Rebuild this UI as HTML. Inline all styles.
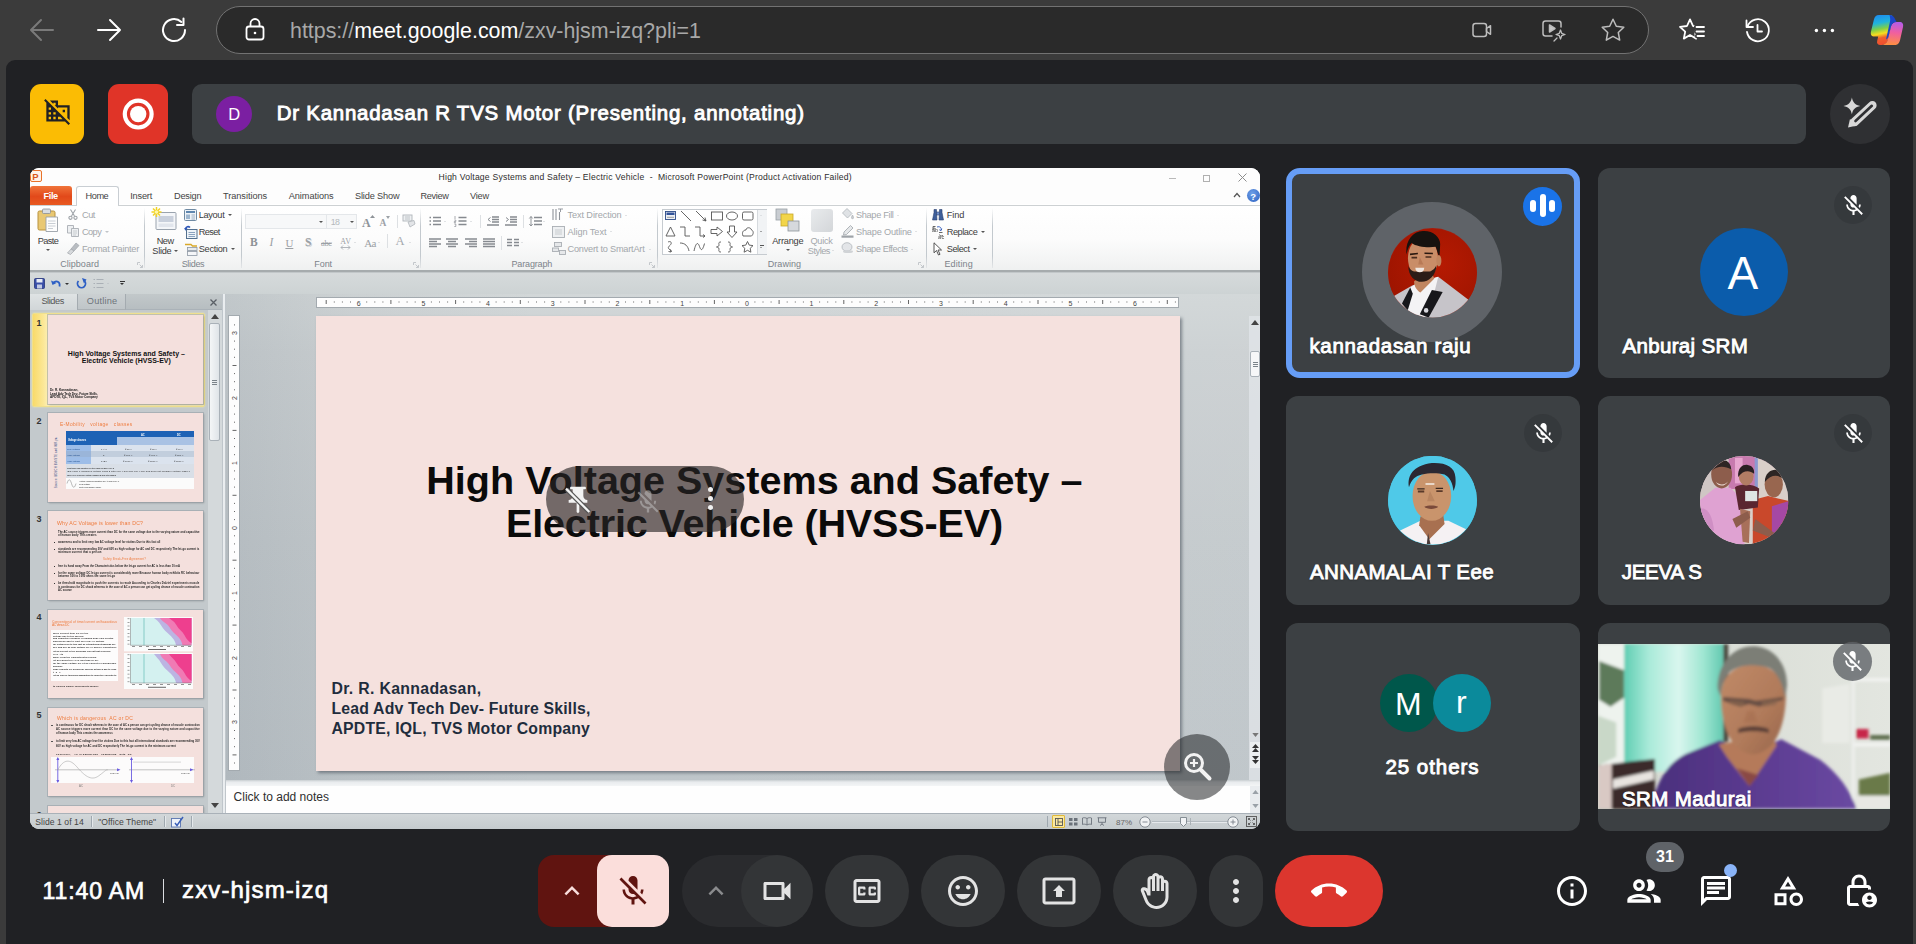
<!DOCTYPE html>
<html lang="en">
<head>
<meta charset="utf-8">
<title>Meet - zxv-hjsm-izq</title>
<style>
html,body{margin:0;padding:0;}
body{width:1916px;height:944px;overflow:hidden;background:#3b3b3b;font-family:"Liberation Sans",sans-serif;position:relative;}
.abs{position:absolute;}
.t{position:absolute;white-space:nowrap;line-height:1;}
svg{position:absolute;overflow:visible;}
/* browser */
#chrome{position:absolute;left:0;top:0;width:1916px;height:944px;background:#3b3b3b;}
#omni{position:absolute;left:216px;top:6px;width:1431px;height:46px;border-radius:24px;background:#2a2a2a;border:1.5px solid #727272;}
#page{position:absolute;left:6px;top:60px;width:1907px;height:884px;background:#202124;border-radius:9px 9px 0 0;}
/* meet */
.tile{position:absolute;background:#3c4043;border-radius:12px;overflow:hidden;}
.name{position:absolute;white-space:nowrap;line-height:1;color:#fff;font-size:20px;font-weight:bold;text-shadow:0 1px 2px rgba(0,0,0,.6);}
.micoff{position:absolute;margin:-3px 0 0 -3px;width:38px;height:38px;border-radius:50%;background:rgba(32,33,36,.55);}
</style>
</head>
<body>
<div id="chrome">
  <div id="omni"></div>
  <div class="t" id="url" style="left:290px;top:21px;font-size:21.4px;color:#a8a8a8;">https://<span style="color:#fff">meet.google.com</span>/zxv-hjsm-izq?pli=1</div>

  <!-- back -->
  <svg style="left:29px;top:18px" width="26" height="24" viewBox="0 0 26 24" fill="none" stroke="#7a7a7a" stroke-width="2" stroke-linecap="round" stroke-linejoin="round"><path d="M24 12H2M12 2L2 12l10 10"/></svg>
  <!-- forward -->
  <svg style="left:96px;top:18px" width="26" height="24" viewBox="0 0 26 24" fill="none" stroke="#fff" stroke-width="2" stroke-linecap="round" stroke-linejoin="round"><path d="M2 12h22M14 2l10 10-10 10"/></svg>
  <!-- reload -->
  <svg style="left:161px;top:17px" width="26" height="26" viewBox="0 0 26 26" fill="none" stroke="#fff" stroke-width="2" stroke-linecap="round" stroke-linejoin="round"><path d="M24 13a11 11 0 1 1-3.6-8.1"/><path d="M22.500 1.500v6.500h-6.500"/></svg>
  <!-- lock -->
  <svg style="left:245px;top:18px" width="20" height="23" viewBox="0 0 20 23" fill="none" stroke="#fff" stroke-width="1.800" stroke-linejoin="round"><rect x="1.500" y="8.500" width="17" height="13" rx="2.500"/><path d="M5.500 8.500V5.500a4.500 4.500 0 0 1 9 0v3"/><circle cx="10" cy="15" r="1.300" fill="#fff" stroke="none"/></svg>
  <!-- camera in omnibox -->
  <svg style="left:1472px;top:21px" width="22" height="18" viewBox="0 0 22 18" fill="none" stroke="#bdbdbd" stroke-width="1.500" stroke-linejoin="round"><rect x="1" y="2.500" width="13.500" height="13" rx="2.500"/><path d="M14.500 7.500l4-2.800v8.600l-4-2.800z"/></svg>
  <!-- play sparkle -->
  <svg style="left:1541px;top:19px" width="26" height="24" viewBox="0 0 26 24" fill="none" stroke="#bdbdbd" stroke-width="1.500" stroke-linejoin="round" stroke-linecap="round"><path d="M11 17H4.500a2.500 2.500 0 0 1-2.500-2.500v-10A2.500 2.500 0 0 1 4.500 2h13A2.500 2.500 0 0 1 20 4.500V8"/><path d="M8.500 6v7l5.500-3.500z" fill="#c8c8c8"/><path d="M19.500 11l1.200 3.300 3.300 1.200-3.300 1.200-1.200 3.300-1.200-3.300-3.300-1.200 3.300-1.200z" stroke-width="1.300"/><path d="M13 22l3-3" stroke-width="1.300"/></svg>
  <!-- star -->
  <svg style="left:1600px;top:17px" width="26" height="26" viewBox="0 0 26 26" fill="none" stroke="#bdbdbd" stroke-width="1.500" stroke-linejoin="round"><path d="M13 2.200l3.300 7 7.500 1-5.500 5.300 1.400 7.600L13 19.400l-6.700 3.700 1.400-7.600L2.200 10.200l7.500-1z"/></svg>
  <!-- favorites -->
  <svg style="left:1679px;top:17px" width="28" height="26" viewBox="0 0 28 26" fill="none" stroke="#fff" stroke-width="1.800" stroke-linejoin="round" stroke-linecap="round"><path d="M11 2.400l3 6.600 7 .8-5.200 4.800 1.400 7L11 18l-6.200 3.600 1.400-7L1 9.800 8 9z"/><path d="M17.500 10h8M17.500 14.500h8M18.500 19h7" stroke="#3b3b3b" stroke-width="5"/><path d="M17.500 10h7.500M17.500 14.500h7.500M18.500 19h6.500"/></svg>
  <!-- history -->
  <svg style="left:1744px;top:17px" width="27" height="27" viewBox="0 0 27 27" fill="none" stroke="#fff" stroke-width="1.800" stroke-linejoin="round" stroke-linecap="round"><path d="M3.500 9.500A11 11 0 1 1 3 15"/><path d="M2.500 3.500v6.500h6.500"/><path d="M13.500 8v6.500h4.500"/></svg>
  <!-- dots -->
  <svg style="left:1812px;top:27px" width="24" height="6" viewBox="0 0 24 6" fill="#fff"><circle cx="4.400" cy="3.500" r="1.700"/><circle cx="12.400" cy="3.500" r="1.700"/><circle cx="20.400" cy="3.500" r="1.700"/></svg>
  <!-- copilot -->
  <svg style="left:1870px;top:14px" width="34" height="32" viewBox="0 0 34 32"><defs>
    <linearGradient id="cpa" x1=".1" y1="0" x2=".25" y2="1"><stop offset="0" stop-color="#1e88f0"/><stop offset=".3" stop-color="#20b4dc"/><stop offset=".5" stop-color="#7fd048"/><stop offset=".66" stop-color="#f6de20"/><stop offset=".8" stop-color="#f0602e"/><stop offset="1" stop-color="#f0502e"/></linearGradient>
    <linearGradient id="cpb" x1=".5" y1="0" x2=".4" y2="1"><stop offset="0" stop-color="#b45ce8"/><stop offset=".45" stop-color="#f05fa0"/><stop offset="1" stop-color="#ff9040"/></linearGradient></defs>
    <path d="M9 1h10.500c2.800 0 4 1.300 3.300 4L18 25.500c-.8 3.300-2.800 5.500-6 5.500h-1.500c-2.800 0-4-1.500-3.300-4.200l1-4.300H4.500C1.500 22.500.3 20.500 1 17.500L3.800 6C4.600 2.800 6 1 9 1z" fill="url(#cpa)"/>
    <path d="M25 31H14.500c-.5 0-1-.1-1.400-.2 2.500-.6 4-2.600 4.700-5.300L21 12.500c.8-3 2.500-4.500 5.500-4.500h3c3 0 4.200 2 3.500 5L30.200 25.500C29.400 28.800 28 31 25 31z" fill="url(#cpb)"/>
    <path d="M19.500 1c2.500 0 4.500 1.500 5.500 4l1.500 3c-3 0-4.700 1.500-5.500 4.500l-2.500 10c-.5 1.500-1.300 2.500-2.500 3l4-18c.5-2.500 0-4.500-.5-6.500z" fill="#1a46c8"/>
  </svg>
</div>
<div id="page">
<div class="abs" id="m" style="left:-6px;top:-60px;width:1916px;height:944px;">
  <!-- top bar -->
  <div class="abs" style="left:30px;top:84px;width:54px;height:60px;border-radius:11px;background:#fbbc04;"></div>
  <svg style="left:43.600px;top:97px" width="28" height="28" viewBox="0 0 24 24" fill="#202124"><path d="M8 5h2v2h-.900L12 9.900V9h8v8.900l2 2V7H12V3H5.100L8 5.900V5zm8 6h2v2h-2zM1.300 1.800L.100 3.100 2 5v16h16l3 3 1.300-1.300-21-20.900zM4 19v-2h2v2H4zm0-4v-2h2v2H4zm0-4V9h2v2H4zm4 8v-2h2v2H8zm0-4v-2h2v2H8zm4 4v-2h1.900l2 2H12z"/></svg>
  <div class="abs" style="left:108px;top:84px;width:60px;height:60px;border-radius:11px;background:#e03428;"></div>
  <svg style="left:122px;top:98px" width="32" height="32" viewBox="0 0 32 32"><circle cx="16.200" cy="16.100" r="13.400" fill="none" stroke="#fff" stroke-width="4.200"/><circle cx="16.200" cy="16.100" r="8.200" fill="#fff"/></svg>
  <div class="abs" style="left:192px;top:84px;width:1614px;height:60px;border-radius:10px;background:#3c4043;"></div>
  <div class="abs" style="left:216.300px;top:96px;width:36px;height:36px;border-radius:50%;background:#7b1fa2;"></div>
  <div class="t" style="left:228.300px;top:106px;font-size:16.500px;color:#fff;">D</div>
  
  <div class="abs" style="left:1830px;top:84px;width:60px;height:60px;border-radius:50%;background:#2f3033;"></div>
  <svg style="left:1830px;top:84px" width="60" height="60" viewBox="0 0 60 60"><path d="M21.900 13.500c.9 5 3.400 7.500 8.400 8.400-5 .9-7.500 3.400-8.400 8.400-.9-5-3.400-7.500-8.400-8.400 5-.9 7.500-3.400 8.400-8.400z" fill="#d8d8d8"/><path d="M42.300 21.300L24.500 38" stroke="#d8d8d8" stroke-width="8.600" stroke-linecap="round"/><path d="M18 43.500l2-8.500 7 6.500z" fill="#d8d8d8"/><path d="M41.800 21.800L25.500 37" stroke="#2f3033" stroke-width="2.600" stroke-linecap="round"/></svg>

  <!-- tiles -->
  <div class="tile" style="left:1286px;top:168px;width:294px;height:210px;box-sizing:border-box;border:6px solid #669df6;border-radius:14px;"></div>
  <div class="abs" style="left:1362px;top:202px;width:140px;height:140px;border-radius:50%;background:#5f6368;"></div>
  <div class="abs" id="av1" style="left:1388px;top:228px;width:89px;height:89px;border-radius:50%;background:#a81a0a;overflow:hidden;"></div>
  <div class="abs" style="left:1523px;top:187px;width:39px;height:39px;border-radius:50%;background:#1a73e8;"></div>
  <div class="abs" style="left:1530px;top:199.500px;width:6px;height:12.500px;border-radius:3px;background:#fff;"></div>
  <div class="abs" style="left:1539.600px;top:194.300px;width:6.200px;height:23px;border-radius:3px;background:#fff;"></div>
  <div class="abs" style="left:1549.300px;top:199.500px;width:6px;height:12.500px;border-radius:3px;background:#fff;"></div>

  <div class="tile" style="left:1598px;top:168px;width:292px;height:210px;"></div>
  <div class="abs" style="left:1700px;top:228px;width:88px;height:88px;border-radius:50%;background:#0b5cab;"></div>
  <div class="t" style="left:1727.500px;top:250px;font-size:46px;color:#fff;">A</div>
  <div class="micoff" style="left:1837px;top:189px;background:rgba(32,33,36,.22)"></div><svg style="left:1840.5px;top:192.5px" width="25" height="25" viewBox="0 0 24 24" fill="#fff"><path d="M19 11h-1.700c0 .740-.160 1.430-.430 2.050l1.230 1.230c.560-.980.900-2.090.900-3.280zm-4.020.170c0-.060.020-.110.020-.170V5c0-1.660-1.340-3-3-3S9 3.340 9 5v.180l5.980 5.990zM4.270 3L3 4.270l6.010 6.010V11c0 1.660 1.330 3 2.990 3 .220 0 .440-.030.650-.080l1.660 1.660c-.710.330-1.500.520-2.310.520-2.760 0-5.300-2.100-5.300-5.100H5c0 3.410 2.720 6.230 6 6.720V21h2v-3.280c.910-.130 1.770-.450 2.540-.900L19.730 21 21 19.730 4.270 3z"/></svg>

  <div class="tile" style="left:1286px;top:396px;width:294px;height:209px;"></div>
  <div class="abs" id="av3" style="left:1388px;top:456px;width:89px;height:89px;border-radius:50%;background:#3fc3e0;overflow:hidden;"></div>
  <div class="micoff" style="left:1527px;top:417px;background:rgba(32,33,36,.22)"></div><svg style="left:1530.5px;top:420.5px" width="25" height="25" viewBox="0 0 24 24" fill="#fff"><path d="M19 11h-1.700c0 .740-.160 1.430-.430 2.050l1.230 1.230c.560-.980.900-2.090.900-3.280zm-4.020.170c0-.060.020-.110.020-.170V5c0-1.660-1.340-3-3-3S9 3.340 9 5v.180l5.980 5.990zM4.270 3L3 4.270l6.010 6.010V11c0 1.660 1.330 3 2.990 3 .220 0 .440-.030.650-.080l1.660 1.660c-.710.330-1.500.520-2.310.520-2.760 0-5.300-2.100-5.300-5.100H5c0 3.410 2.720 6.230 6 6.720V21h2v-3.280c.910-.130 1.770-.450 2.540-.900L19.730 21 21 19.730 4.270 3z"/></svg>

  <div class="tile" style="left:1598px;top:396px;width:292px;height:209px;"></div>
  <div class="abs" id="av4" style="left:1700px;top:456px;width:88px;height:88px;border-radius:50%;background:#b98aa0;overflow:hidden;"></div>
  <div class="micoff" style="left:1837px;top:417px;background:rgba(32,33,36,.22)"></div><svg style="left:1840.5px;top:420.5px" width="25" height="25" viewBox="0 0 24 24" fill="#fff"><path d="M19 11h-1.700c0 .740-.160 1.430-.430 2.050l1.230 1.230c.560-.980.900-2.090.900-3.280zm-4.020.170c0-.060.020-.110.020-.170V5c0-1.660-1.340-3-3-3S9 3.340 9 5v.180l5.980 5.990zM4.270 3L3 4.270l6.010 6.010V11c0 1.660 1.330 3 2.990 3 .220 0 .440-.030.650-.080l1.660 1.660c-.710.330-1.500.520-2.310.520-2.760 0-5.300-2.100-5.300-5.100H5c0 3.410 2.720 6.230 6 6.720V21h2v-3.280c.910-.130 1.770-.450 2.540-.900L19.730 21 21 19.730 4.270 3z"/></svg>

  <div class="tile" style="left:1286px;top:623px;width:294px;height:208px;"></div>
  <div class="abs" style="left:1380px;top:674px;width:58px;height:58px;border-radius:50%;background:#00574b;"></div>
  <div class="t" style="left:1395px;top:688px;font-size:32px;color:#fff;">M</div>
  <div class="abs" style="left:1433px;top:674px;width:58px;height:58px;border-radius:50%;background:#0b8a9b;"></div>
  <div class="t" style="left:1456px;top:686px;font-size:32px;color:#fff;">r</div>

  <div class="tile" style="left:1598px;top:623px;width:292px;height:208px;"></div>
  <div class="abs" id="vid" style="left:1598px;top:644px;width:292px;height:165px;background:#9ec9b4;overflow:hidden;"></div>
  <div class="micoff" style="left:1837px;top:644px;background:rgba(70,70,70,.6)"></div><svg style="left:1840.5px;top:647.5px" width="25" height="25" viewBox="0 0 24 24" fill="#fff"><path d="M19 11h-1.700c0 .740-.160 1.430-.430 2.050l1.230 1.230c.560-.980.900-2.090.900-3.280zm-4.020.170c0-.060.020-.110.020-.170V5c0-1.660-1.340-3-3-3S9 3.340 9 5v.180l5.980 5.990zM4.270 3L3 4.270l6.010 6.010V11c0 1.660 1.330 3 2.990 3 .220 0 .440-.030.650-.080l1.660 1.660c-.710.330-1.500.520-2.310.520-2.760 0-5.300-2.100-5.300-5.100H5c0 3.410 2.720 6.230 6 6.720V21h2v-3.280c.910-.130 1.770-.450 2.540-.900L19.730 21 21 19.730 4.270 3z"/></svg>

  <!-- bottom bar -->
  <div class="t" style="left:42.500px;top:880px;font-size:23px;color:#fff;letter-spacing:.900px;-webkit-text-stroke:.700px #fff;">11:40 AM</div>
  <div class="abs" style="left:163px;top:879px;width:1px;height:24px;background:#dadce0;"></div>
  <div class="t" style="left:182px;top:878px;font-size:24px;color:#fff;letter-spacing:1.150px;-webkit-text-stroke:.700px #fff;">zxv-hjsm-izq</div>

  <div class="abs" style="left:538px;top:855px;width:100px;height:72px;border-radius:16px 0 0 16px;background:#601410;"></div>
  <div class="abs" style="left:597px;top:855px;width:72px;height:72px;border-radius:15px;background:#fbdedb;"></div>
  <svg style="left:556.5px;top:876.0px" width="30" height="30" viewBox="0 0 24 24" fill="#f9dedc"><path d="M12 8l-6 6 1.410 1.410L12 10.830l4.590 4.580L18 14z"/></svg>
  <svg style="left:614.5px;top:873.0px" width="36" height="36" viewBox="0 0 24 24" fill="#601410"><path d="M19 11h-1.700c0 .740-.160 1.430-.430 2.050l1.230 1.230c.560-.980.900-2.090.900-3.280zm-4.020.170c0-.060.020-.110.020-.170V5c0-1.660-1.340-3-3-3S9 3.340 9 5v.180l5.980 5.990zM4.270 3L3 4.270l6.010 6.010V11c0 1.660 1.330 3 2.990 3 .220 0 .440-.030.650-.080l1.660 1.660c-.710.330-1.500.520-2.310.520-2.760 0-5.300-2.100-5.300-5.100H5c0 3.410 2.720 6.230 6 6.720V21h2v-3.280c.910-.130 1.770-.450 2.540-.900L19.730 21 21 19.730 4.270 3z"/></svg>

  <div class="abs" style="left:682px;top:855px;width:130px;height:72px;border-radius:36px;background:#2a2b2e;"></div>
  <div class="abs" style="left:741px;top:855px;width:72px;height:72px;border-radius:36px;background:#333537;"></div>
  <svg style="left:700.5px;top:876.0px" width="30" height="30" viewBox="0 0 24 24" fill="#8a8b8d"><path d="M12 8l-6 6 1.410 1.410L12 10.830l4.590 4.580L18 14z"/></svg>
  <svg style="left:759.0px;top:873.0px" width="36" height="36" viewBox="0 0 24 24" fill="#e3e3e3"><path d="M15 8v8H5V8h10m1-2H4c-.550 0-1 .450-1 1v10c0 .550.450 1 1 1h12c.550 0 1-.450 1-1v-3.500l4 4v-11l-4 4V7c0-.550-.450-1-1-1z"/></svg>
  <div class="abs" style="left:825px;top:855px;width:84px;height:72px;border-radius:36px;background:#333537;"></div>
  <svg style="left:849.0px;top:873.0px" width="36" height="36" viewBox="0 0 24 24" fill="#e3e3e3"><path d="M19 4H5c-1.110 0-2 .900-2 2v12c0 1.100.890 2 2 2h14c1.100 0 2-.900 2-2V6c0-1.100-.900-2-2-2zm0 14H5V6h14v12zM7 15h3c.550 0 1-.450 1-1v-1H9.500v.500h-2v-3h2v.500H11v-1c0-.550-.450-1-1-1H7c-.550 0-1 .450-1 1v4c0 .550.450 1 1 1zm7 0h3c.550 0 1-.450 1-1v-1h-1.500v.500h-2v-3h2v.500H18v-1c0-.550-.450-1-1-1h-3c-.550 0-1 .450-1 1v4c0 .550.450 1 1 1z"/></svg>
  <div class="abs" style="left:921px;top:855px;width:84px;height:72px;border-radius:36px;background:#333537;"></div>
  <svg style="left:945.0px;top:873.0px" width="36" height="36" viewBox="0 0 24 24" fill="#e3e3e3"><path d="M11.990 2C6.470 2 2 6.480 2 12s4.470 10 9.990 10C17.520 22 22 17.520 22 12S17.520 2 11.990 2zM12 20c-4.420 0-8-3.580-8-8s3.580-8 8-8 8 3.580 8 8-3.580 8-8 8zm3.500-9c.830 0 1.500-.670 1.500-1.500S16.330 8 15.500 8 14 8.670 14 9.500s.670 1.500 1.500 1.500zm-7 0c.830 0 1.500-.670 1.500-1.500S9.330 8 8.500 8 7 8.670 7 9.500 7.670 11 8.500 11zm3.500 6.500c2.330 0 4.310-1.460 5.110-3.500H6.890c.800 2.040 2.780 3.500 5.110 3.500z"/></svg>
  <div class="abs" style="left:1017px;top:855px;width:84px;height:72px;border-radius:36px;background:#333537;"></div>
  <svg style="left:1041.0px;top:873.0px" width="36" height="36" viewBox="0 0 24 24" fill="#e3e3e3"><path d="M21 3H3c-1.110 0-2 .890-2 2v14c0 1.110.890 2 2 2h18c1.110 0 2-.890 2-2V5c0-1.110-.890-2-2-2zm0 16.020H3V4.980h18v14.040zM10 12H8l4-4 4 4h-2v4h-4v-4z"/></svg>
  <div class="abs" style="left:1113px;top:855px;width:84px;height:72px;border-radius:36px;background:#333537;"></div>
  <svg style="left:1137.0px;top:873.0px" width="36" height="36" viewBox="0 0 24 24" fill="#e3e3e3"><path d="M21 7c0-1.380-1.120-2.500-2.500-2.500-.170 0-.340.020-.500.050V4c0-1.380-1.120-2.500-2.500-2.500-.230 0-.460.030-.670.090C14.460.660 13.560 0 12.500 0c-1.230 0-2.250.890-2.460 2.060C9.870 2.020 9.690 2 9.500 2 8.120 2 7 3.120 7 4.500v5.890c-.340-.310-.760-.540-1.220-.660L5.010 9.520c-.830-.230-1.700.090-2.190.830-.380.570-.400 1.310-.150 1.950l2.560 6.430C6.490 21.910 9.570 24 13 24c4.420 0 8-3.580 8-8V7zm-2 9c0 3.310-2.690 6-6 6-2.610 0-4.950-1.590-5.910-4.010l-2.600-6.540.530.140c.460.120.830.460 1 .900L7 15h2V4.500c0-.280.220-.500.500-.500s.500.220.500.500V12h2V2.500c0-.280.220-.500.500-.500s.500.220.500.500V12h2V4c0-.280.220-.500.500-.500s.500.220.500.500v8h2V7c0-.280.220-.500.500-.500s.500.220.500.500v9z"/></svg>
  <div class="abs" style="left:1209px;top:855px;width:54px;height:72px;border-radius:36px;background:#333537;"></div>
  <svg style="left:1218.0px;top:873.0px" width="36" height="36" viewBox="0 0 24 24" fill="#e3e3e3"><path d="M12 8c1.100 0 2-.900 2-2s-.900-2-2-2-2 .900-2 2 .900 2 2 2zm0 2c-1.100 0-2 .900-2 2s.900 2 2 2 2-.900 2-2-.900-2-2-2zm0 6c-1.100 0-2 .900-2 2s.900 2 2 2 2-.900 2-2-.900-2-2-2z"/></svg>
  <div class="abs" style="left:1275px;top:855px;width:108px;height:72px;border-radius:36px;background:#dc362e;"></div>
  <svg style="left:1311.0px;top:873.0px" width="36" height="36" viewBox="0 0 24 24" fill="#fff"><path d="M12 9c-1.600 0-3.150.250-4.600.720v3.100c0 .390-.230.740-.560.900-.980.490-1.870 1.120-2.660 1.850-.180.180-.430.280-.700.280-.280 0-.530-.110-.710-.290L.290 13.080c-.180-.170-.290-.420-.290-.700 0-.280.110-.530.290-.710C3.340 8.780 7.460 7 12 7s8.660 1.780 11.710 4.670c.180.180.290.430.290.710 0 .280-.110.530-.290.710l-2.480 2.480c-.180.180-.430.290-.710.290-.270 0-.520-.110-.700-.280-.790-.740-1.690-1.360-2.670-1.850-.330-.160-.560-.500-.560-.900v-3.100C15.150 9.250 13.600 9 12 9z"/></svg>

  <svg style="left:1554.0px;top:873.0px" width="36" height="36" viewBox="0 0 24 24" fill="#fff"><path d="M11 7h2v2h-2zm0 4h2v6h-2zm1-9C6.480 2 2 6.480 2 12s4.480 10 10 10 10-4.480 10-10S17.520 2 12 2zm0 18c-4.410 0-8-3.590-8-8s3.590-8 8-8 8 3.590 8 8-3.590 8-8 8z"/></svg>
  <svg style="left:1624px;top:871px" width="40" height="40" viewBox="0 0 24 24" fill="#fff"><path d="M9 13.750c-2.340 0-7 1.170-7 3.500V19h14v-1.750c0-2.330-4.660-3.500-7-3.500zM4.340 17c.840-.580 2.870-1.250 4.660-1.250s3.820.670 4.660 1.250H4.340zM9 12c1.930 0 3.500-1.570 3.500-3.500S10.930 5 9 5 5.500 6.570 5.500 8.500 7.070 12 9 12zm0-5c.830 0 1.500.670 1.500 1.500S9.830 10 9 10s-1.500-.670-1.500-1.500S8.170 7 9 7zm7.040 6.810c1.160.840 1.960 1.960 1.960 3.440V19h4v-1.750c0-2.020-3.500-3.170-5.960-3.440zM15 12c1.930 0 3.500-1.570 3.500-3.500S16.930 5 15 5c-.540 0-1.040.130-1.500.350.630.890 1 1.980 1 3.150s-.370 2.260-1 3.150c.460.220.960.350 1.500.350z"/></svg>
  <svg style="left:1698.0px;top:873.0px" width="36" height="36" viewBox="0 0 24 24" fill="#fff"><path d="M4 4h16v12H5.170L4 17.170V4m0-2c-1.100 0-1.990.900-1.990 2L2 22l4-4h14c1.100 0 2-.900 2-2V4c0-1.100-.900-2-2-2H4zm2 10h8v2H6v-2zm0-3h12v2H6V9zm0-3h12v2H6V6z"/></svg>
  <svg style="left:1770.0px;top:873.0px" width="36" height="36" viewBox="0 0 24 24" fill="#fff"><path d="M12 2l-5.500 9h11L12 2zm0 3.840L13.930 9h-3.870L12 5.840zM17.500 13c-2.490 0-4.500 2.010-4.500 4.500s2.010 4.500 4.500 4.500 4.500-2.010 4.500-4.500-2.010-4.500-4.500-4.500zm0 7c-1.380 0-2.500-1.120-2.500-2.500s1.120-2.500 2.500-2.500 2.500 1.120 2.500 2.500-1.120 2.500-2.500 2.500zM3 21.500h8v-8H3v8zm2-6h4v4H5v-4z"/></svg>
  <svg style="left:1841px;top:873px" width="36" height="36" viewBox="0 0 24 24" fill="#fff"><path d="M6 20V10h12v1.090c.33-.05.66-.09 1-.09s.67.040 1 .090V10c0-1.100-.900-2-2-2h-1V6c0-2.760-2.240-5-5-5S7 3.240 7 6v2H6c-1.100 0-2 .900-2 2v10c0 1.100.900 2 2 2h6.260c-.420-.600-.750-1.280-.970-2H6zM9 6c0-1.660 1.340-3 3-3s3 1.340 3 3v2H9V6z"/><path d="M19 13c-2.760 0-5 2.240-5 5s2.240 5 5 5 5-2.240 5-5-2.240-5-5-5zm0 2c.830 0 1.500.670 1.500 1.500S19.830 18 19 18s-1.500-.670-1.500-1.500S18.170 15 19 15zm0 6c-1.030 0-1.940-.520-2.480-1.320.730-.420 1.570-.680 2.480-.680s1.750.260 2.480.680c-.540.800-1.450 1.320-2.480 1.320z"/></svg>
  <div class="abs" style="left:1646px;top:842px;width:38px;height:30px;border-radius:15px;background:#5f6368;"></div>
  <div class="t" style="left:1656px;top:849px;font-size:16px;font-weight:bold;color:#fff;">31</div>
  <div class="abs" style="left:1723.500px;top:863.500px;width:13px;height:13px;border-radius:50%;background:#8ab4f8;"></div>
<div class="t" style="left:1309.4px;top:336.1px;font-size:20.5px;letter-spacing:0.69px;color:#fff;-webkit-text-stroke:.900px #fff;text-shadow:0 1px 2px rgba(0,0,0,.55);">kannadasan raju</div>
<div class="t" style="left:1622.5px;top:336.2px;font-size:20.5px;letter-spacing:0.33px;color:#fff;-webkit-text-stroke:.900px #fff;text-shadow:0 1px 2px rgba(0,0,0,.55);">Anburaj SRM</div>
<div class="t" style="left:1310.0px;top:562.0px;font-size:20.5px;letter-spacing:0.39px;color:#fff;-webkit-text-stroke:.900px #fff;text-shadow:0 1px 2px rgba(0,0,0,.55);">ANNAMALAI T Eee</div>
<div class="t" style="left:1621.7px;top:562.0px;font-size:20.5px;letter-spacing:-0.25px;color:#fff;-webkit-text-stroke:.900px #fff;text-shadow:0 1px 2px rgba(0,0,0,.55);">JEEVA S</div>
<div class="t" style="left:1385.5px;top:756.9px;font-size:20.5px;letter-spacing:0.95px;color:#fff;-webkit-text-stroke:.900px #fff;">25 others</div>
<div class="t" style="left:276.7px;top:103.3px;font-size:20.4px;letter-spacing:0.80px;color:#fff;-webkit-text-stroke:.900px #fff;">Dr Kannadasan R TVS Motor (Presenting, annotating)</div>
<svg style="left:1387.900px;top:228.500px" width="89" height="88.400" viewBox="125 130 700 695">
<defs><clipPath id="c1"><circle cx="475" cy="477.500" r="349"/></clipPath>
<radialGradient id="g1" cx=".6" cy=".4" r=".7"><stop offset="0" stop-color="#b51a02"/><stop offset="1" stop-color="#9c1400"/></radialGradient></defs>
<g clip-path="url(#c1)">
<rect x="125" y="130" width="700" height="695" fill="url(#g1)"/>
<path d="M165 660l150-85 205-70 235 180 20 160H160z" fill="#c6c4c9"/>
<path d="M300 590l60-40 160-45-30 120-80 200-140-40z" fill="#f4f3f5"/>
<path d="M330 540c0 40 20 70 50 90l110-110-30-60z" fill="#c08560"/>
<path d="M300 590l20 50-40 130-45-55z" fill="#17171b"/>
<path d="M470 610l85 15-110 200-70-25z" fill="#17171b"/>
<ellipse cx="400" cy="360" rx="118" ry="165" fill="#c98d68"/>
<path d="M285 420c0 80 50 125 105 125s115-50 115-130c-10 30-40 50-60 50h-100c-30 0-50-20-60-45z" fill="#2b1c17"/>
<path d="M340 435h70c0 25-15 35-35 35s-35-10-35-35z" fill="#efe6e0"/>
<path d="M270 330c-10-100 40-180 130-185 80-5 140 50 135 110l-5 95c-15-20-20-60-30-80-60 10-150 0-190-30-20 20-30 50-40 90z" fill="#17120f"/>
<ellipse cx="525" cy="380" rx="20" ry="45" fill="#c08560"/>
<path d="M298 322l62-6v12l-62 8zM412 314l66 2v13l-66-3z" fill="#2a1810"/><path d="M310 348h44v13h-44zM420 344h46v13h-46z" fill="#4a2c1e"/><path d="M375 350l-12 60h40z" fill="#b87a56"/>
<circle cx="425" cy="770" r="18" fill="#d8d8de"/>
</g></svg>
<svg style="left:1387.900px;top:455.900px" width="89" height="88.400" viewBox="125 125 700 695">
<defs><clipPath id="c3"><circle cx="475" cy="472.500" r="349"/></clipPath></defs>
<g clip-path="url(#c3)">
<rect x="125" y="125" width="700" height="695" fill="#4fc9e8"/>
<path d="M200 720l180-85h220l160 75 30 120H180z" fill="#f5f1f3"/>
<path d="M380 600l-10 70 80 110 120-120-10-70z" fill="#a87050"/>
<path d="M440 730l20 90h-30z" fill="#4a3a38"/>
<ellipse cx="470" cy="440" rx="152" ry="195" fill="#c9946c"/>
<path d="M290 370c-15-90 30-170 180-190 110-5 180 30 185 110 5 50 0 80-15 110-5-60-30-110-70-130-80-20-200-10-240 30-20 20-30 40-40 70z" fill="#2b2832"/>
<path d="M420 340h70v12h-70z" fill="#f4efe8"/>
<path d="M355 378h58v10h-58zM500 375h58v10h-58z" fill="#3a2820"/><path d="M360 397h50v14h-50zM505 394h50v14h-50z" fill="#5a3a2a"/><path d="M455 400l-22 80h60z" fill="#b98560"/>
<path d="M410 525c30-14 80-14 110 0-20 22-90 22-110 0z" fill="#7a4a3a"/>
</g></svg>
<svg style="left:1699.900px;top:455.900px" width="88.400" height="88.400" viewBox="125 125 695 695">
<defs><clipPath id="c4"><circle cx="472.500" cy="472.500" r="347"/></clipPath></defs>
<g clip-path="url(#c4)">
<rect x="125" y="125" width="695" height="695" fill="#d9cfc9"/>
<rect x="125" y="125" width="240" height="350" fill="#cfc6c4"/>
<rect x="350" y="125" width="220" height="260" fill="#c77aae"/>
<rect x="400" y="140" width="60" height="200" fill="#e7a6cf"/>
<rect x="555" y="125" width="25" height="300" fill="#8d9ad0"/>
<path d="M125 470l120-95h120l100 100 10 350H125z" fill="#dfa2d2"/>
<path d="M125 540c60-20 100 60 110 170l-110 20z" fill="#cf8fc4"/>
<ellipse cx="295" cy="270" rx="82" ry="110" fill="#8d5d4c"/>
<path d="M215 240c0-70 60-95 110-80 30 10 45 40 45 70-50-30-110-30-155 10z" fill="#2d2524"/>
<path d="M250 330c30 25 70 25 95-5-20 40-75 45-95 5z" fill="#e8d8d0"/>
<path d="M540 470l120-30 170 40v340H540z" fill="#c9482b"/>
<path d="M690 520l130-40v220l-130 60z" fill="#a548a4"/>
<path d="M560 620l150 110-20 40-150-60z" fill="#8d5d4c"/>
<ellipse cx="705" cy="350" rx="72" ry="100" fill="#98664f"/>
<path d="M635 330c0-80 60-105 100-95 30 8 45 40 45 70-40-35-100-35-145 25z" fill="#2d2524"/>
<path d="M400 370c40-30 140-30 190 10l-10 150-150 20z" fill="#5a2630"/>
<rect x="480" y="400" width="95" height="80" fill="#dfe5e4"/>
<ellipse cx="488" cy="285" rx="58" ry="72" fill="#b27c64"/>
<path d="M425 290c-5-80 40-100 75-95 40 5 55 40 50 70-35-30-85-30-125 25z" fill="#2a2022"/>
<path d="M440 540l80 20-10 250-50-10z" fill="#a8705a"/>
<path d="M380 620l120-60 20 50-110 80z" fill="#8d5d4c"/>
</g></svg>
<svg style="left:1598px;top:643.900px;overflow:hidden" width="292.200" height="164.700" viewBox="35 105 1283 723" preserveAspectRatio="none">
<defs>
<linearGradient id="cur" x1="0" y1="0" x2="1" y2="0"><stop offset="0" stop-color="#5fcdb2"/><stop offset=".25" stop-color="#a9ead9"/><stop offset=".55" stop-color="#d9f6ee"/><stop offset=".8" stop-color="#9fe6d2"/><stop offset="1" stop-color="#62c9b0"/></linearGradient>
<linearGradient id="wall" x1="0" y1="0" x2="1" y2="0"><stop offset="0" stop-color="#d3d8cf"/><stop offset="1" stop-color="#e3e6e0"/></linearGradient>
<filter id="bl"><feGaussianBlur stdDeviation="7"/></filter>
<linearGradient id="shirt" x1="0" y1="0" x2="1" y2="0"><stop offset="0" stop-color="#4a2f7c"/><stop offset=".5" stop-color="#5b3b90"/><stop offset="1" stop-color="#6a49a2"/></linearGradient>
<linearGradient id="face" x1="0" y1="0" x2="1" y2="1"><stop offset="0" stop-color="#c08a68"/><stop offset=".6" stop-color="#b07a5a"/><stop offset="1" stop-color="#96644a"/></linearGradient>
</defs>
<rect x="35" y="105" width="1283" height="723" fill="url(#wall)"/>
<g filter="url(#bl)">
<rect x="35" y="105" width="160" height="723" fill="#eef3ee"/>
<path d="M40 180l110 40v120l-60 40-50-30z" fill="#5d7a5a"/>
<path d="M35 420l80 30v150l-80 40z" fill="#c9d8c8"/>
<rect x="150" y="105" width="435" height="560" fill="url(#cur)"/>
<rect x="585" y="105" width="22" height="430" fill="#4a4a40"/>
<path d="M35 640l150-20 100-10v220H35z" fill="#3b2c2a"/>
<path d="M35 640l60-10v200H35z" fill="#d9c9c4"/>
<path d="M100 700l180-40v40l-180 40z" fill="#e8e4e0"/>
<rect x="1150" y="255" width="170" height="14" fill="#f3f4f2"/>
<rect x="1150" y="540" width="170" height="14" fill="#f3f4f2"/>
<rect x="1150" y="255" width="12" height="573" fill="#eef0ee"/>
<rect x="1168" y="478" width="55" height="42" fill="#c72848"/>
<rect x="1230" y="505" width="88" height="20" fill="#5a6a4a"/>
<path d="M1020 300l120-20v260h-120z" fill="#e9ebe6"/>
<path d="M1180 700l138-30v120l-138 30z" fill="#6a7a4a"/>
<path d="M1170 770h148v58h-148z" fill="#e8e8e4"/>
<path d="M270 828c20-120 70-200 150-240l150-60 130 60 140-65 170 90c80 60 130 130 160 215z" fill="url(#shirt)"/>
<path d="M565 545l35 55 100 130 120-180-25-45z" fill="#b57a5a"/>
<path d="M645 650l55 80 40-50z" fill="#8a4a44"/>
<path d="M575 330c0-80 60-135 140-135s150 60 145 150c-5 110-40 235-145 245-100-10-140-130-140-260z" fill="url(#face)"/>
<path d="M560 300c0-110 70-185 155-185s150 70 150 170l-8 60c-10-70-40-120-70-135-60-20-130-15-170 15-25 25-40 60-45 110z" fill="#7b7e76"/>
<path d="M585 338l115 8 28 8 120-16v12l-105 30-45-12-40 12-75-26z" fill="#5a4640" opacity=".85"/>
<path d="M610 352l70 6-10 22-50-8zM750 356l80-8-15 26-55 6z" fill="#8a6650" opacity=".7"/>
<path d="M650 478c35-16 100-16 135 0v18c-35-10-100-10-135 0z" fill="#5a4038"/>
<path d="M690 400l-15 50h60l-15-50z" fill="#a56e50" opacity=".6"/>
</g>
</svg>
<div class="abs" style="left:1833px;top:641.500px;width:39px;height:39px;border-radius:50%;background:rgba(95,99,104,.8);"></div><svg style="left:1840px;top:648.500px" width="25" height="25" viewBox="0 0 24 24" fill="#fff"><path d="M19 11h-1.700c0 .740-.160 1.430-.430 2.050l1.230 1.230c.560-.980.900-2.090.900-3.280zm-4.020.170c0-.060.020-.110.020-.170V5c0-1.660-1.340-3-3-3S9 3.340 9 5v.180l5.980 5.990zM4.270 3L3 4.270l6.010 6.010V11c0 1.660 1.330 3 2.990 3 .220 0 .440-.030.650-.080l1.660 1.660c-.710.330-1.500.520-2.310.520-2.760 0-5.300-2.100-5.300-5.100H5c0 3.410 2.720 6.230 6 6.720V21h2v-3.280c.910-.130 1.770-.450 2.540-.900L19.730 21 21 19.730 4.270 3z"/></svg>
<div class="t" style="left:1621.9px;top:789.1px;font-size:20.5px;letter-spacing:0.41px;color:#fff;-webkit-text-stroke:.900px #fff;text-shadow:0 1px 2px rgba(0,0,0,.6);">SRM Madurai</div><div class="abs" id="ppt" style="left:30px;top:168px;width:1230px;height:661px;border-radius:9px;overflow:hidden;background:#fff;">
<div class="abs" style="left:-30px;top:-168px;width:1916px;height:944px;">
<div class="abs" style="left:30px;top:168px;width:1230px;height:36px;background:#fdfdfd;"></div>
<div class="abs" style="left:30px;top:169.500px;width:9.500px;height:10px;border:1.300px solid #e8722a;border-radius:2px;background:#fff3e8;"></div>
<div class="t" style="left:32.3px;top:171.6px;font-size:9.5px;letter-spacing:-0.34px;color:#d8581a;font-weight:bold;">P</div>
<div class="t" style="left:438.6px;top:173.2px;font-size:8.6px;letter-spacing:0.21px;color:#2d2d2d;white-space:pre;">High Voltage Systems and Safety – Electric Vehicle  -  Microsoft PowerPoint (Product Activation Failed)</div>
<div class="abs" style="left:1169px;top:178px;width:7px;height:1px;background:#b9b9b9;"></div>
<div class="abs" style="left:1203px;top:175px;width:5px;height:5px;border:1px solid #b0b0b0;"></div>
<svg style="left:1238px;top:173px" width="9" height="9" viewBox="0 0 9 9" stroke="#8d8d8d" stroke-width="1"><path d="M.5.5l8 8M8.500.5l-8 8"/></svg>
<svg style="left:1233px;top:192px" width="8" height="6" viewBox="0 0 8 6" fill="none" stroke="#555" stroke-width="1.200"><path d="M1 5l3-3.500L7 5"/></svg>
<div class="abs" style="left:1246.500px;top:188.500px;width:13px;height:13px;border-radius:50%;background:radial-gradient(circle at 40% 35%,#6ea0e8,#2a5fc0);"></div>
<div class="t" style="left:1250.3px;top:191.8px;font-size:9.5px;letter-spacing:0.00px;color:#fff;font-weight:bold;">?</div>
<div class="abs" style="left:30px;top:186px;width:42px;height:18.500px;border-radius:3px 3px 0 0;background:linear-gradient(#f0743a,#e2491a 55%,#e85a22);"></div>
<div class="t" style="left:43.6px;top:192.0px;font-size:9.2px;letter-spacing:-0.41px;color:#fff;font-weight:bold;">File</div>
<div class="abs" style="left:75.500px;top:186px;width:43px;height:20px;box-sizing:border-box;border:1px solid #c9ced3;border-bottom:none;border-radius:3px 3px 0 0;background:#fff;"></div>
<div class="t" style="left:85.5px;top:192.0px;font-size:9.2px;letter-spacing:-0.43px;color:#444;">Home</div>
<div class="t" style="left:130.2px;top:192.0px;font-size:9.2px;letter-spacing:-0.18px;color:#444;">Insert</div>
<div class="t" style="left:174.0px;top:192.0px;font-size:9.2px;letter-spacing:-0.21px;color:#444;">Design</div>
<div class="t" style="left:222.9px;top:192.0px;font-size:9.2px;letter-spacing:-0.03px;color:#444;">Transitions</div>
<div class="t" style="left:288.7px;top:192.0px;font-size:9.2px;letter-spacing:-0.06px;color:#444;">Animations</div>
<div class="t" style="left:355.0px;top:192.0px;font-size:9.2px;letter-spacing:-0.16px;color:#444;">Slide Show</div>
<div class="t" style="left:420.6px;top:192.0px;font-size:9.2px;letter-spacing:-0.38px;color:#444;">Review</div>
<div class="t" style="left:470.0px;top:192.0px;font-size:9.2px;letter-spacing:-0.19px;color:#444;">View</div>
<div class="abs" style="left:30px;top:204.500px;width:1230px;height:66px;background:linear-gradient(#ffffff 0%,#fcfcfc 50%,#f3f4f4 85%,#eef0f0 100%);border-top:1px solid #cdd1d3;box-sizing:border-box;"></div>
<div class="abs" style="left:76.5px;top:204px;width:41px;height:2px;background:#fff;"></div>
<div class="abs" style="left:30px;top:270px;width:1230px;height:1.5px;background:#a6abad;"></div>
<div class="abs" style="left:30px;top:271.5px;width:1230px;height:1.5px;background:#c2c7c9;"></div>
<div class="abs" style="left:144.4px;top:208px;width:1px;height:60px;background:linear-gradient(rgba(200,205,210,0),#c3c9ce 30%,#c3c9ce 80%,rgba(200,205,210,.3));"></div>
<div class="abs" style="left:240.9px;top:208px;width:1px;height:60px;background:linear-gradient(rgba(200,205,210,0),#c3c9ce 30%,#c3c9ce 80%,rgba(200,205,210,.3));"></div>
<div class="abs" style="left:420px;top:208px;width:1px;height:60px;background:linear-gradient(rgba(200,205,210,0),#c3c9ce 30%,#c3c9ce 80%,rgba(200,205,210,.3));"></div>
<div class="abs" style="left:656.5px;top:208px;width:1px;height:60px;background:linear-gradient(rgba(200,205,210,0),#c3c9ce 30%,#c3c9ce 80%,rgba(200,205,210,.3));"></div>
<div class="abs" style="left:925.8px;top:208px;width:1px;height:60px;background:linear-gradient(rgba(200,205,210,0),#c3c9ce 30%,#c3c9ce 80%,rgba(200,205,210,.3));"></div>
<div class="abs" style="left:991.5px;top:208px;width:1px;height:60px;background:linear-gradient(rgba(200,205,210,0),#c3c9ce 30%,#c3c9ce 80%,rgba(200,205,210,.3));"></div>
<div class="t" style="left:60.2px;top:259.8px;font-size:9px;letter-spacing:0.03px;color:#7c838a;">Clipboard</div>
<div class="t" style="left:181.7px;top:259.8px;font-size:9px;letter-spacing:-0.32px;color:#7c838a;">Slides</div>
<div class="t" style="left:314.3px;top:259.8px;font-size:9px;letter-spacing:-0.08px;color:#7c838a;">Font</div>
<div class="t" style="left:511.5px;top:259.8px;font-size:9px;letter-spacing:-0.15px;color:#7c838a;">Paragraph</div>
<div class="t" style="left:767.8px;top:259.8px;font-size:9px;letter-spacing:0.03px;color:#7c838a;">Drawing</div>
<div class="t" style="left:944.4px;top:259.8px;font-size:9px;letter-spacing:0.14px;color:#7c838a;">Editing</div>
<svg style="left:137px;top:262px" width="6" height="6" viewBox="0 0 6 6" fill="none" stroke="#c3c7cb" stroke-width="1"><path d="M.5 3V.5H3M2.500 2.500l3 3M5.500 3v2.500H3"/></svg>
<svg style="left:413px;top:262px" width="6" height="6" viewBox="0 0 6 6" fill="none" stroke="#c3c7cb" stroke-width="1"><path d="M.5 3V.5H3M2.500 2.500l3 3M5.500 3v2.500H3"/></svg>
<svg style="left:649px;top:262px" width="6" height="6" viewBox="0 0 6 6" fill="none" stroke="#c3c7cb" stroke-width="1"><path d="M.5 3V.5H3M2.500 2.500l3 3M5.500 3v2.500H3"/></svg>
<svg style="left:917.5px;top:262px" width="6" height="6" viewBox="0 0 6 6" fill="none" stroke="#c3c7cb" stroke-width="1"><path d="M.5 3V.5H3M2.500 2.500l3 3M5.500 3v2.500H3"/></svg>
<svg style="left:37px;top:208px" width="23" height="25" viewBox="0 0 23 25"><rect x="1" y="3" width="17" height="19" rx="1.500" fill="#e9c873" stroke="#b9923f" stroke-width="1"/><rect x="5.500" y="1" width="8" height="4.500" rx="1" fill="#d9dde2" stroke="#8a8f96" stroke-width=".8"/><path d="M9 9h11.500v14.500H9z" fill="#fdfdfd" stroke="#9aa0a8" stroke-width=".9"/><path d="M11 13h7.500M11 15.500h7.500M11 18h7.500M11 20.500h5" stroke="#c3c8cf" stroke-width=".9"/></svg>
<div class="t" style="left:37.7px;top:236.9px;font-size:9.2px;letter-spacing:-0.60px;color:#3b3b3b;">Paste</div>
<div class="abs" style="left:45.7px;top:249.35px;width:0;height:0;border-left:2.3px solid transparent;border-right:2.3px solid transparent;border-top:2.3px solid #555;"></div>
<svg style="left:68px;top:209px" width="10" height="11" viewBox="0 0 10 11" fill="none" stroke="#9ea3a8" stroke-width="1.100"><path d="M2.500.5l4 6.500M7.500.5l-4 6.500"/><circle cx="2.500" cy="8.800" r="1.600"/><circle cx="7.500" cy="8.800" r="1.600"/></svg>
<div class="t" style="left:82.0px;top:211.3px;font-size:9.2px;letter-spacing:-0.44px;color:#a3a7ab;">Cut</div>
<svg style="left:67px;top:225px" width="12" height="12" viewBox="0 0 12 12" fill="#eef0f2" stroke="#a9aeb3" stroke-width=".9"><path d="M.5.5h6v7.500h-6z"/><path d="M4.500 3.500h7v8h-7z"/><path d="M6 6h4M6 8h4M6 10h3" stroke="#c3c7cb"/></svg>
<div class="t" style="left:82.0px;top:228.1px;font-size:9.2px;letter-spacing:-0.57px;color:#a3a7ab;">Copy</div>
<div class="abs" style="left:104.7px;top:231.0px;width:0;height:0;border-left:2px solid transparent;border-right:2px solid transparent;border-top:2px solid #c0c4c8;"></div>
<svg style="left:67px;top:242px" width="13" height="13" viewBox="0 0 13 13" fill="#b9bdc2" stroke="#a0a5aa" stroke-width=".7"><path d="M9 1l3 2.500-5 5.500-3-2z"/><path d="M4 7l3 2-3.500 3.500L.5 11z" fill="#d6d9dc"/></svg>
<div class="t" style="left:82.0px;top:245.0px;font-size:9.2px;letter-spacing:-0.27px;color:#a3a7ab;">Format Painter</div>
<svg style="left:151px;top:207px" width="27" height="25" viewBox="0 0 27 25"><rect x="5" y="5.500" width="20" height="17" rx="1" fill="#f4f6f9" stroke="#9aa3ae" stroke-width="1"/><rect x="7.500" y="9" width="15" height="6" fill="#c9d0dc"/><rect x="7.500" y="16.500" width="15" height="3.500" fill="#e1e5ec"/><path d="M5.500 0v10M.5 5h10M2 1.500l7 7M9 1.500l-7 7" stroke="#f2d324" stroke-width="1.500"/><circle cx="5.500" cy="5" r="1.700" fill="#fff7a8"/></svg>
<div class="t" style="left:156.7px;top:236.9px;font-size:9.2px;letter-spacing:-0.50px;color:#3b3b3b;">New</div>
<div class="t" style="left:152.3px;top:246.8px;font-size:9.2px;letter-spacing:-0.29px;color:#3b3b3b;">Slide</div>
<div class="abs" style="left:174.1px;top:249.95px;width:0;height:0;border-left:2.1px solid transparent;border-right:2.1px solid transparent;border-top:2.1px solid #555;"></div>
<svg style="left:184px;top:209px" width="13" height="12" viewBox="0 0 13 12"><rect x=".5" y=".5" width="12" height="11" rx="1" fill="#eef3f8" stroke="#6f8aa3" stroke-width="1"/><rect x="2" y="2" width="9" height="2" fill="#5f87b0"/><rect x="2" y="5.500" width="4" height="4.500" fill="#9db6cf"/><path d="M7.500 6h3.500M7.500 8h3.500M7.500 10h3.500" stroke="#8aa0b8" stroke-width=".8"/></svg>
<div class="t" style="left:198.8px;top:211.3px;font-size:9.2px;letter-spacing:-0.34px;color:#3b3b3b;">Layout</div>
<div class="abs" style="left:227.9px;top:214.45px;width:0;height:0;border-left:2.1px solid transparent;border-right:2.1px solid transparent;border-top:2.1px solid #555;"></div>
<svg style="left:184px;top:225px" width="14" height="14" viewBox="0 0 14 14"><rect x="2.500" y="4.500" width="10.500" height="9" fill="#eef3f8" stroke="#53708f" stroke-width="1"/><path d="M4.500 7.500h6.500M4.500 9.500h6.500M4.500 11.500h6.500" stroke="#7f9ab8" stroke-width=".9"/><path d="M6 2.500C4.500 1 2 1.500 1.500 4" fill="none" stroke="#2d56b8" stroke-width="1.600"/><path d="M0 3.200l1.700 2.500L3.500 3z" fill="#2d56b8"/></svg>
<div class="t" style="left:198.8px;top:228.1px;font-size:9.2px;letter-spacing:-0.65px;color:#3b3b3b;">Reset</div>
<svg style="left:184px;top:242px" width="14" height="14" viewBox="0 0 14 14"><path d="M1 2.500h6l1.500 1.500H13" fill="none" stroke="#d9a928" stroke-width="1.300"/><rect x="3.500" y="5.500" width="9.500" height="3" fill="#e8ebef" stroke="#8d97a3" stroke-width=".8"/><rect x="3.500" y="9.500" width="9.500" height="4" fill="#f5f6f8" stroke="#8d97a3" stroke-width=".8"/></svg>
<div class="t" style="left:198.8px;top:245.0px;font-size:9.2px;letter-spacing:-0.31px;color:#3b3b3b;">Section</div>
<div class="abs" style="left:230.9px;top:248.45px;width:0;height:0;border-left:2.1px solid transparent;border-right:2.1px solid transparent;border-top:2.1px solid #555;"></div>
<div class="abs" style="left:244.500px;top:214px;width:82px;height:15px;box-sizing:border-box;background:#f7f8f9;border:1px solid #e4e7ea;"></div>
<div class="abs" style="left:326px;top:214px;width:31px;height:15px;box-sizing:border-box;background:#f7f8f9;border:1px solid #e4e7ea;"></div>
<div class="abs" style="left:318.9px;top:220.95px;width:0;height:0;border-left:2.1px solid transparent;border-right:2.1px solid transparent;border-top:2.1px solid #555;"></div>
<div class="abs" style="left:349.7px;top:220.95px;width:0;height:0;border-left:2.1px solid transparent;border-right:2.1px solid transparent;border-top:2.1px solid #555;"></div>
<div class="t" style="left:330.7px;top:218.4px;font-size:8.8px;letter-spacing:-0.49px;color:#b4b8bc;">18</div>
<div class="t" style="left:362.0px;top:217.1px;font-size:12px;letter-spacing:0.00px;color:#8f9499;font-weight:bold;font-family:'Liberation Serif',serif;">A</div>
<svg style="left:370px;top:215px" width="5" height="3" viewBox="0 0 5 3" fill="#8f9499"><path d="M0 3l2.500-3L5 3z"/></svg>
<div class="t" style="left:379.6px;top:219.3px;font-size:9.5px;letter-spacing:0.00px;color:#9da2a7;font-weight:bold;font-family:'Liberation Serif',serif;">A</div>
<svg style="left:386px;top:216px" width="4" height="3" viewBox="0 0 4 3" fill="#9da2a7"><path d="M0 0l2 3 2-3z"/></svg>
<div class="abs" style="left:396.5px;top:215px;width:1px;height:13px;background:#dde0e3;"></div>
<svg style="left:402px;top:214px" width="14" height="14" viewBox="0 0 14 14"><rect x="1" y="1" width="9" height="6" fill="#eef0f2" stroke="#b0b5ba" stroke-width=".9"/><path d="M3 3h5M3 5h5" stroke="#b9bec3" stroke-width=".9"/><path d="M6 8l6-1.500 1 3.500-5 3z" fill="#e3e5e8" stroke="#b0b5ba" stroke-width=".8"/></svg>
<div class="t" style="left:249.9px;top:237.1px;font-size:11.5px;letter-spacing:0.00px;color:#8d9297;font-weight:bold;font-family:'Liberation Serif',serif;">B</div>
<div class="t" style="left:269.5px;top:237.1px;font-size:11.5px;letter-spacing:0.00px;color:#9ba0a5;font-family:'Liberation Serif',serif;font-style:italic;">I</div>
<div class="t" style="left:285.4px;top:237.5px;font-size:11px;letter-spacing:0.00px;color:#9ba0a5;font-family:'Liberation Serif',serif;text-decoration:underline;">U</div>
<div class="t" style="left:305.1px;top:237.1px;font-size:11.5px;letter-spacing:0.00px;color:#9ba0a5;font-weight:bold;font-family:'Liberation Serif',serif;text-shadow:1px 1px 0 #d0d3d6;">S</div>
<div class="t" style="left:321.1px;top:239.1px;font-size:8.5px;letter-spacing:-0.40px;color:#9ba0a5;font-family:'Liberation Serif',serif;text-decoration:line-through;">abc</div>
<div class="t" style="left:340.2px;top:237.5px;font-size:8px;letter-spacing:0.41px;color:#9ba0a5;font-family:'Liberation Serif',serif;">AV</div>
<svg style="left:340px;top:244.500px" width="11" height="5" viewBox="0 0 11 5" fill="none" stroke="#a9aeb3" stroke-width=".9"><path d="M1 2.500h9M3 .5l-2 2 2 2M8 .5l2 2-2 2"/></svg>
<div class="abs" style="left:353.7px;top:242.1px;width:0;height:0;border-left:1.8px solid transparent;border-right:1.8px solid transparent;border-top:1.8px solid #c3c7cb;"></div>
<div class="t" style="left:364.3px;top:237.5px;font-size:11px;letter-spacing:-0.73px;color:#9ba0a5;font-family:'Liberation Serif',serif;">Aa</div>
<div class="abs" style="left:378.2px;top:242.1px;width:0;height:0;border-left:1.8px solid transparent;border-right:1.8px solid transparent;border-top:1.8px solid #c3c7cb;"></div>
<div class="abs" style="left:386.5px;top:234px;width:1px;height:14px;background:#dde0e3;"></div>
<div class="t" style="left:395.6px;top:235.2px;font-size:12.5px;letter-spacing:0.00px;color:#a4a9ae;font-family:'Liberation Serif',serif;">A</div>
<div class="abs" style="left:408.7px;top:242.1px;width:0;height:0;border-left:1.8px solid transparent;border-right:1.8px solid transparent;border-top:1.8px solid #c3c7cb;"></div>
<svg style="left:428.5px;top:215.5px" width="13" height="11" viewBox="0 0 13 11" fill="none" stroke="#868a90" stroke-width="1.350"><path d="M4 1.500h8M4 5h8M4 8.500h8"/><path d="M.5 1.500h1.500M.5 5h1.500M.5 8.500h1.500" stroke-width="1.500"/></svg>
<div class="abs" style="left:444.2px;top:221.1px;width:0;height:0;border-left:1.8px solid transparent;border-right:1.8px solid transparent;border-top:1.8px solid #c3c7cb;"></div>
<svg style="left:453.5px;top:215.5px" width="13" height="11" viewBox="0 0 13 11" fill="none" stroke="#868a90" stroke-width="1.350"><path d="M4.500 1.500h8M4.500 5h8M4.500 8.500h8"/><path d="M1 0v3M.3 4h1.500v1.500H.3v1.200h1.700M.3 8h1.500v2.500H.3" stroke-width=".7"/></svg>
<div class="abs" style="left:469.7px;top:221.1px;width:0;height:0;border-left:1.8px solid transparent;border-right:1.8px solid transparent;border-top:1.8px solid #c3c7cb;"></div>
<div class="abs" style="left:479.5px;top:215px;width:1px;height:13px;background:#dde0e3;"></div>
<svg style="left:487px;top:215.5px" width="13" height="11" viewBox="0 0 13 11" fill="none" stroke="#868a90" stroke-width="1.350"><path d="M5 1h7M5 3.500h7M5 6h7M0 9h12"/><path d="M3.500 1.500L1 3.500l2.500 2" stroke-width="1"/></svg>
<svg style="left:504.7px;top:215.5px" width="13" height="11" viewBox="0 0 13 11" fill="none" stroke="#868a90" stroke-width="1.350"><path d="M5 1h7M5 3.500h7M5 6h7M0 9h12"/><path d="M1 1.500l2.500 2-2.500 2" stroke-width="1"/></svg>
<div class="abs" style="left:522.5px;top:215px;width:1px;height:13px;background:#dde0e3;"></div>
<svg style="left:528.5px;top:215.5px" width="13" height="11" viewBox="0 0 13 11" fill="none" stroke="#868a90" stroke-width="1.350"><path d="M5 1.500h8M5 5h8M5 8.500h8"/><path d="M2 .5v9.500M.3 2.500L2 .5l1.700 2M.3 8L2 10l1.700-2" stroke-width=".9"/></svg>
<div class="abs" style="left:543.2px;top:221.1px;width:0;height:0;border-left:1.8px solid transparent;border-right:1.8px solid transparent;border-top:1.8px solid #c3c7cb;"></div>
<svg style="left:428.5px;top:238px" width="13" height="11" viewBox="0 0 13 11" fill="none" stroke="#868a90" stroke-width="1.350"><path d="M0 1h12M0 3.500h8M0 6h12M0 8.500h8"/></svg>
<svg style="left:446.4px;top:238px" width="13" height="11" viewBox="0 0 13 11" fill="none" stroke="#868a90" stroke-width="1.350"><path d="M0 1h12M2 3.500h8M0 6h12M2 8.500h8"/></svg>
<svg style="left:464.7px;top:238px" width="13" height="11" viewBox="0 0 13 11" fill="none" stroke="#868a90" stroke-width="1.350"><path d="M0 1h12M4 3.500h8M0 6h12M4 8.500h8"/></svg>
<svg style="left:482.7px;top:238px" width="13" height="11" viewBox="0 0 13 11" fill="none" stroke="#868a90" stroke-width="1.350"><path d="M0 1h12M0 3.500h12M0 6h12M0 8.500h12"/></svg>
<div class="abs" style="left:500.5px;top:236px;width:1px;height:14px;background:#dde0e3;"></div>
<svg style="left:507px;top:238px" width="13" height="11" viewBox="0 0 13 11" fill="none" stroke="#868a90" stroke-width="1.350"><path d="M0 1.500h5M7 1.500h5M0 4.500h5M7 4.500h5M0 7.500h5M7 7.500h5" stroke-width="1.400"/></svg>
<div class="abs" style="left:520.7px;top:242.1px;width:0;height:0;border-left:1.8px solid transparent;border-right:1.8px solid transparent;border-top:1.8px solid #c3c7cb;"></div>
<svg style="left:552px;top:208.500px" width="12" height="12" viewBox="0 0 12 12" fill="none" stroke="#8d9298" stroke-width="1.100"><path d="M1 0v11M4 0v11M7.500 3v8"/><path d="M6 0h5M8.500 0v3" stroke-width=".9"/></svg>
<div class="t" style="left:567.5px;top:211.3px;font-size:9.2px;letter-spacing:-0.11px;color:#a3a7ab;">Text Direction</div>
<div class="abs" style="left:624.7px;top:214.6px;width:0;height:0;border-left:1.8px solid transparent;border-right:1.8px solid transparent;border-top:1.8px solid #c3c7cb;"></div>
<svg style="left:552px;top:225.500px" width="13" height="12" viewBox="0 0 13 12" fill="#eef0f2" stroke="#a9aeb3" stroke-width=".9"><rect x=".5" y=".5" width="12" height="11"/><path d="M3 4h7M3 6h7M3 8h7" stroke="#c3c7cb"/></svg>
<div class="t" style="left:567.5px;top:228.1px;font-size:9.2px;letter-spacing:-0.08px;color:#a3a7ab;">Align Text</div>
<div class="abs" style="left:609.7px;top:231.1px;width:0;height:0;border-left:1.8px solid transparent;border-right:1.8px solid transparent;border-top:1.8px solid #c3c7cb;"></div>
<svg style="left:552px;top:242px" width="14" height="13" viewBox="0 0 14 13" fill="#e6e8ea" stroke="#a9aeb3" stroke-width=".9"><rect x="2.500" y=".5" width="7" height="4"/><rect x=".5" y="6" width="6" height="3.500"/><rect x="7.500" y="8.500" width="6" height="4"/></svg>
<div class="t" style="left:567.5px;top:245.0px;font-size:9.2px;letter-spacing:-0.22px;color:#a3a7ab;">Convert to SmartArt</div>
<div class="abs" style="left:648.7px;top:248.6px;width:0;height:0;border-left:1.8px solid transparent;border-right:1.8px solid transparent;border-top:1.8px solid #c3c7cb;"></div>
<div class="abs" style="left:662px;top:208.500px;width:105px;height:46px;box-sizing:border-box;background:#fff;border:1px solid #c6cbd0;"></div>
<div class="abs" style="left:756.500px;top:209.500px;width:9.500px;height:44px;background:#f1f3f5;border-left:1px solid #d6dade;"></div>
<div class="abs" style="left:759.9px;top:215.2px;width:0;height:0;border-left:1.6px solid transparent;border-right:1.6px solid transparent;border-top:1.6px solid #c9cdd1;"></div>
<div class="abs" style="left:759.7px;top:230.6px;width:0;height:0;border-left:1.8px solid transparent;border-right:1.8px solid transparent;border-top:1.8px solid #555;"></div>
<div class="abs" style="left:759.5px;top:244.5px;width:4.5px;height:1px;background:#555;"></div>
<div class="abs" style="left:759.7px;top:247.1px;width:0;height:0;border-left:1.8px solid transparent;border-right:1.8px solid transparent;border-top:1.8px solid #555;"></div>
<svg style="left:664px;top:210px" width="92" height="44" viewBox="664 210 92 44" fill="none" stroke="#555" stroke-width=".9"><rect x="665.500" y="211.500" width="10" height="8" fill="#eef1f6" stroke="#2c4a86"/><rect x="666.500" y="212.500" width="8" height="2.500" fill="#34559a" stroke="none"/><path d="M667 217.300h7" stroke="#777" stroke-width=".7"/><path d="M681 211l10 10"/><path d="M696 211l10 10M706 221l-3.500-1M706 221l-1-3.500"/><rect x="711.500" y="212" width="11" height="8"/><ellipse cx="732" cy="216" rx="5.500" ry="4"/><rect x="742.500" y="212" width="10.500" height="8" rx="1.500"/><path d="M670.500 227l-4.500 9h9z"/><path d="M680 227h5v9h5"/><path d="M695 227h5v9h5M705 236l-2-1.500M705 236l-2 1.500"/><path d="M711 229.500h6v-2.500l5.500 4.500-5.500 4.500v-2.500h-6z"/><path d="M729.500 226h5v6h2.500l-5 5.500-5-5.500h2.500z"/><path d="M743 236c-1.500-4 .5-6 3-6 0-3 5-3 5.500 0 2 .5 2.500 4 0 6z"/><path d="M668 242c2-1 4 0 3 2s-4 3-2 5 3 1 2 3M668.500 251.500l2.500.5-.5-2.500"/><path d="M680 243c5 0 8 3 9 8"/><path d="M694 251c2-9 4-9 5.500-4.500s3 4.500 5 -3"/><path d="M721 242c-3 0-2 1.500-2 3s-1.500 2-2.500 2c1 0 2.500.5 2.500 2s-1 3 2 3"/><path d="M728 242c3 0 2 1.500 2 3s1.500 2 2.500 2c-1 0-2.500.5-2.500 2s1 3-2 3"/><path d="M747.500 241.500l1.700 3.600 3.800.5-2.800 2.700.7 3.900-3.400-1.900-3.400 1.900.7-3.900-2.800-2.700 3.800-.5z"/></svg>
<svg style="left:775px;top:208px" width="26" height="25" viewBox="0 0 26 25"><rect x="1" y="1" width="11" height="11" fill="#c9cdd2" stroke="#9aa0a6" stroke-width=".8"/><rect x="6" y="6" width="12" height="12" fill="#f2d54a" stroke="#c9a92a" stroke-width=".8"/><rect x="13" y="13" width="11" height="10" fill="#d6d9dd" stroke="#8d9399" stroke-width=".8"/></svg>
<div class="t" style="left:772.2px;top:236.7px;font-size:9.2px;letter-spacing:-0.22px;color:#3b3b3b;">Arrange</div>
<div class="abs" style="left:785.9px;top:249.45px;width:0;height:0;border-left:2.1px solid transparent;border-right:2.1px solid transparent;border-top:2.1px solid #555;"></div>
<div class="abs" style="left:811px;top:209px;width:22px;height:23px;border-radius:3px;background:linear-gradient(135deg,#e9ebed,#d3d6d9);"></div>
<div class="t" style="left:810.5px;top:236.7px;font-size:9.2px;letter-spacing:-0.30px;color:#a3a7ab;">Quick</div>
<div class="t" style="left:807.8px;top:246.8px;font-size:9.2px;letter-spacing:-0.48px;color:#a3a7ab;">Styles</div>
<div class="abs" style="left:832.2px;top:250.1px;width:0;height:0;border-left:1.8px solid transparent;border-right:1.8px solid transparent;border-top:1.8px solid #c3c7cb;"></div>
<svg style="left:841px;top:208px" width="13" height="12" viewBox="0 0 13 12" fill="#dfe2e5" stroke="#b0b5ba" stroke-width=".8"><path d="M6 .5l5 5-4.500 4.500-5-5z"/><path d="M11.500 7c.8 1.500 1 2 1 2.700a1 1 0 0 1-2 0c0-.7.200-1.200 1-2.700z" fill="#c9cdd1"/></svg>
<div class="t" style="left:856.0px;top:211.3px;font-size:9.2px;letter-spacing:-0.33px;color:#a3a7ab;">Shape Fill</div>
<div class="abs" style="left:896.7px;top:214.6px;width:0;height:0;border-left:1.8px solid transparent;border-right:1.8px solid transparent;border-top:1.8px solid #c3c7cb;"></div>
<svg style="left:841px;top:225px" width="13" height="13" viewBox="0 0 13 13" fill="#e6e8ea" stroke="#a0a5aa" stroke-width=".8"><path d="M9.500.5l2.500 2.500-6.500 6.500-3 .5.500-3z"/><rect x=".5" y="10.500" width="12" height="2.200" fill="#9ea3a8" stroke="none"/></svg>
<div class="t" style="left:856.0px;top:228.1px;font-size:9.2px;letter-spacing:-0.19px;color:#a3a7ab;">Shape Outline</div>
<div class="abs" style="left:914.7px;top:231.1px;width:0;height:0;border-left:1.8px solid transparent;border-right:1.8px solid transparent;border-top:1.8px solid #c3c7cb;"></div>
<svg style="left:841px;top:242px" width="13" height="12" viewBox="0 0 13 12"><ellipse cx="6" cy="5" rx="5" ry="4.300" fill="#e3e5e8" stroke="#b0b5ba" stroke-width=".8"/><ellipse cx="7" cy="9.500" rx="5" ry="1.500" fill="#d0d3d6"/></svg>
<div class="t" style="left:856.0px;top:245.0px;font-size:9.2px;letter-spacing:-0.41px;color:#a3a7ab;">Shape Effects</div>
<div class="abs" style="left:910.7px;top:248.6px;width:0;height:0;border-left:1.8px solid transparent;border-right:1.8px solid transparent;border-top:1.8px solid #c3c7cb;"></div>
<svg style="left:932px;top:208.500px" width="12" height="12" viewBox="0 0 12 12" fill="#3f5f9a" stroke="#2c4270" stroke-width=".6"><path d="M2 .5h2.500v3L5 11H.5L2 3.500z"/><path d="M7.500.5H10v3l1.500 7.500H7L7.500 3.500z"/><rect x="4.500" y="3" width="3" height="3" fill="#6f8fca"/></svg>
<div class="t" style="left:946.8px;top:211.3px;font-size:9.2px;letter-spacing:-0.07px;color:#3b3b3b;">Find</div>
<svg style="left:932px;top:225px" width="13" height="13" viewBox="0 0 13 13" fill="none" stroke="#555" stroke-width=".9"><path d="M1 5V1.500h2.500M1 3.200h2"/><path d="M7 7.500h3.500M7.500 9.500c0 2 3 2 3.500.5" /><path d="M5 2c3-1 5 1 4 3.500M9 5.500l-1.700-.7M9 5.500l.8-1.700" stroke="#2d56b8"/></svg>
<div class="t" style="left:932.0px;top:227.1px;font-size:22.0px;letter-spacing:-0.23px;color:#444;transform:scale(0.25);transform-origin:0 0;">ab</div>
<div class="t" style="left:937.5px;top:234.1px;font-size:22.0px;letter-spacing:1.38px;color:#444;transform:scale(0.25);transform-origin:0 0;">ac</div>
<div class="t" style="left:946.8px;top:228.1px;font-size:9.2px;letter-spacing:-0.46px;color:#3b3b3b;">Replace</div>
<div class="abs" style="left:981.3px;top:230.95px;width:0;height:0;border-left:2.1px solid transparent;border-right:2.1px solid transparent;border-top:2.1px solid #555;"></div>
<svg style="left:933px;top:241.500px" width="10" height="14" viewBox="0 0 10 14" fill="#fff" stroke="#444" stroke-width=".9"><path d="M1 .8v10l2.500-2.300 2 4.500 1.500-.7-2-4.300h3.500z"/></svg>
<div class="t" style="left:946.8px;top:245.0px;font-size:9.2px;letter-spacing:-0.48px;color:#3b3b3b;">Select</div>
<div class="abs" style="left:972.9px;top:248.45px;width:0;height:0;border-left:2.1px solid transparent;border-right:2.1px solid transparent;border-top:2.1px solid #555;"></div>
<div class="abs" style="left:30px;top:272.5px;width:1230px;height:21px;background:linear-gradient(#d6dadb,#cdd3d4);"></div>
<svg style="left:34px;top:277.500px" width="11" height="11" viewBox="0 0 11 11"><rect x=".5" y=".5" width="10" height="10" rx="1" fill="#3a4fa8" stroke="#27357a" stroke-width=".8"/><rect x="2.500" y="1" width="6" height="3.500" fill="#e8ecf5"/><rect x="3" y="6.500" width="5" height="4" fill="#c3cbe3"/></svg>
<svg style="left:51px;top:277.500px" width="11" height="11" viewBox="0 0 11 11" fill="none" stroke="#2d5fc4" stroke-width="1.800"><path d="M2 5.500C4 2 9.500 3 8.500 8.500"/><path d="M0 2.500l1.500 4.500 4-2z" fill="#2d5fc4" stroke="none"/></svg>
<div class="abs" style="left:64.8px;top:282.5px;width:0;height:0;border-left:2px solid transparent;border-right:2px solid transparent;border-top:2px solid #333;"></div>
<svg style="left:75.500px;top:277.500px" width="11" height="11" viewBox="0 0 11 11" fill="none" stroke="#2d5fc4" stroke-width="1.800"><path d="M2.500 3a4 4 0 1 0 6 0"/><path d="M6 0l4.500 1.500L8 5.500z" fill="#2d5fc4" stroke="none"/></svg>
<svg style="left:93px;top:277.500px" width="11" height="11" viewBox="0 0 11 11" fill="none" stroke="#aab0b6" stroke-width="1.100"><path d="M3.500 1.500h7M3.500 5.500h7M3.500 9.500h7M.5 1.500h1.500M.5 5.500h1.500M.5 9.500h1.500"/></svg>
<div class="abs" style="left:107.0px;top:282.6px;width:0;height:0;border-left:1.8px solid transparent;border-right:1.8px solid transparent;border-top:1.8px solid #b4bac0;"></div>
<div class="abs" style="left:119.8px;top:280.5px;width:5.2px;height:1px;background:#333;"></div>
<div class="abs" style="left:120.0px;top:283.3px;width:0;height:0;border-left:2.4px solid transparent;border-right:2.4px solid transparent;border-top:2.4px solid #333;"></div>
<div class="abs" style="left:30px;top:293.5px;width:196px;height:520px;background:#c3c9cb;"></div>
<div class="abs" style="left:30px;top:293.5px;width:192px;height:16px;background:linear-gradient(#c2c8ca,#b6bdc0);"></div>
<div class="abs" style="left:30px;top:293.500px;width:47.500px;height:17px;background:linear-gradient(#dfe3e4,#d0d5d7);border-right:1px solid #a4abb0;box-sizing:border-box;"></div>
<div class="abs" style="left:77.500px;top:293.500px;width:48px;height:16px;background:linear-gradient(#cbd0d2,#bfc5c8);border-right:1px solid #a4abb0;border-bottom:1px solid #aab0b4;box-sizing:border-box;"></div>
<div class="abs" style="left:125.5px;top:309px;width:96.5px;height:1px;background:#aab2b8;"></div>
<div class="t" style="left:41.4px;top:297.0px;font-size:9.2px;letter-spacing:-0.41px;color:#555;">Slides</div>
<div class="t" style="left:86.8px;top:297.0px;font-size:9.2px;letter-spacing:0.19px;color:#6d747a;">Outline</div>
<svg style="left:209.500px;top:298.500px" width="7" height="7" viewBox="0 0 7 7" stroke="#5a6066" stroke-width="1.300"><path d="M.5.5l6 6M6.500.5l-6 6"/></svg>
<div class="abs" style="left:30px;top:310px;width:178px;height:503px;background:#c3c9cc;"></div>
<div class="abs" style="left:207.5px;top:310px;width:14.5px;height:503px;background:#d4d9db;"></div>
<svg style="left:210.500px;top:313.500px" width="8" height="5" viewBox="0 0 8 5" fill="#444"><path d="M0 5l4-5 4 5z"/></svg>
<div class="abs" style="left:208.500px;top:323px;width:11.500px;height:118px;box-sizing:border-box;border:1px solid #a9b1b8;border-radius:2px;background:linear-gradient(90deg,#f4f6f7,#dfe4e8);"></div>
<div class="abs" style="left:211.5px;top:380px;width:5.5px;height:1px;background:#7b838a;"></div>
<div class="abs" style="left:211.5px;top:382px;width:5.5px;height:1px;background:#7b838a;"></div>
<div class="abs" style="left:211.5px;top:384px;width:5.5px;height:1px;background:#7b838a;"></div>
<svg style="left:210.500px;top:802.500px" width="8" height="5" viewBox="0 0 8 5" fill="#444"><path d="M0 0l4 5 4-5z"/></svg>
<div class="abs" style="left:222px;top:293.5px;width:4px;height:520px;background:linear-gradient(90deg,#aab2b8,#eef1f3 40%,#eef1f3 60%,#aab2b8);"></div>
<div class="abs" style="left:32px;top:313px;width:172.500px;height:93.500px;box-sizing:border-box;border:1.5px solid #efe08e;border-radius:2px;background:linear-gradient(90deg,#f8da6a 0%,#fbe796 6%,#fdf2c0 10%,#fbefb8 100%);box-shadow:0 0 2px rgba(250,240,160,.9);"></div>
<div class="abs" style="left:47.500px;top:315.2px;width:155px;height:88.6px;background:#f4e0dd;box-shadow:0 0 0 1px rgba(150,158,165,.55),1px 1px 2px rgba(0,0,0,.25);"></div>
<div class="t" style="left:36.5px;top:319.0px;font-size:9px;letter-spacing:0.00px;color:#333;font-weight:bold;">1</div>
<div class="abs" style="left:47.500px;top:413.3px;width:155px;height:88.6px;background:#f4e0dd;box-shadow:0 0 0 1px rgba(150,158,165,.55),1px 1px 2px rgba(0,0,0,.25);"></div>
<div class="t" style="left:36.5px;top:417.1px;font-size:9px;letter-spacing:0.00px;color:#333;font-weight:bold;">2</div>
<div class="abs" style="left:47.500px;top:511.4px;width:155px;height:88.6px;background:#f4e0dd;box-shadow:0 0 0 1px rgba(150,158,165,.55),1px 1px 2px rgba(0,0,0,.25);"></div>
<div class="t" style="left:36.5px;top:515.2px;font-size:9px;letter-spacing:0.00px;color:#333;font-weight:bold;">3</div>
<div class="abs" style="left:47.500px;top:609.5px;width:155px;height:88.6px;background:#f4e0dd;box-shadow:0 0 0 1px rgba(150,158,165,.55),1px 1px 2px rgba(0,0,0,.25);"></div>
<div class="t" style="left:36.5px;top:613.3px;font-size:9px;letter-spacing:0.00px;color:#333;font-weight:bold;">4</div>
<div class="abs" style="left:47.500px;top:707.6px;width:155px;height:88.6px;background:#f4e0dd;box-shadow:0 0 0 1px rgba(150,158,165,.55),1px 1px 2px rgba(0,0,0,.25);"></div>
<div class="t" style="left:36.5px;top:711.4px;font-size:9px;letter-spacing:0.00px;color:#333;font-weight:bold;">5</div>
<div class="abs" style="left:47.500px;top:805.7px;width:155px;height:88.6px;background:#f4e0dd;box-shadow:0 0 0 1px rgba(150,158,165,.55),1px 1px 2px rgba(0,0,0,.25);"></div>
<div class="t" style="left:36.5px;top:810.9px;font-size:9px;letter-spacing:0.00px;color:#333;font-weight:bold;">6</div>
<div class="t" style="left:67.8px;top:349.7px;font-size:7px;letter-spacing:0.03px;color:#111;font-weight:bold;">High Voltage Systems and Safety –</div>
<div class="t" style="left:81.7px;top:357.2px;font-size:7px;letter-spacing:0.02px;color:#111;font-weight:bold;">Electric Vehicle (HVSS-EV)</div>
<div class="t" style="left:49.8px;top:388.4px;font-size:12.8px;letter-spacing:-0.21px;color:#222;font-weight:bold;transform:scale(0.25);transform-origin:0 0;">Dr. R. Kannadasan,</div>
<div class="t" style="left:49.8px;top:391.7px;font-size:12.8px;letter-spacing:-0.41px;color:#222;font-weight:bold;transform:scale(0.25);transform-origin:0 0;">Lead Adv Tech Dev- Future Skills,</div>
<div class="t" style="left:49.8px;top:395.1px;font-size:12.8px;letter-spacing:-0.47px;color:#222;font-weight:bold;transform:scale(0.25);transform-origin:0 0;">APDTE, IQL, TVS Motor Company</div>
<div class="t" style="left:60.3px;top:421.9px;font-size:19.2px;letter-spacing:1.62px;color:#ee7a3c;transform:scale(0.25);transform-origin:0 0;white-space:pre;">E-Mobility   voltage   classes</div>
<div class="abs" style="left:66px;top:430.5px;width:127.5px;height:33.5px;background:#dbe3ee;"></div>
<div class="abs" style="left:66px;top:430.5px;width:127.5px;height:6.5px;background:#1e62b5;"></div>
<div class="abs" style="left:66px;top:430.5px;width:51px;height:14.5px;background:#1e62b5;"></div>
<div class="abs" style="left:117px;top:437px;width:76.5px;height:8px;background:#a9c2e4;"></div>
<div class="abs" style="left:66px;top:445px;width:25px;height:18.5px;background:#9dbde8;"></div>
<div class="abs" style="left:66px;top:451px;width:127.5px;height:6px;background:rgba(150,165,190,.35);"></div>
<div class="t" style="left:68.0px;top:438.6px;font-size:10.4px;letter-spacing:-0.35px;color:#fff;font-weight:bold;transform:scale(0.25);transform-origin:0 0;">Voltage classes</div>
<div class="t" style="left:141.0px;top:434.1px;font-size:10.4px;letter-spacing:-0.51px;color:#fff;font-weight:bold;transform:scale(0.25);transform-origin:0 0;">AC</div>
<div class="t" style="left:177.0px;top:434.1px;font-size:10.4px;letter-spacing:-0.51px;color:#fff;font-weight:bold;transform:scale(0.25);transform-origin:0 0;">DC</div>
<div class="t" style="left:67.0px;top:448.3px;font-size:9.6px;letter-spacing:-0.08px;color:#24508e;transform:scale(0.25);transform-origin:0 0;">Low-Voltage</div>
<div class="t" style="left:100.9px;top:448.3px;font-size:9.6px;letter-spacing:0.00px;color:#333;transform:scale(0.25);transform-origin:0 0;">1 (A*)</div>
<div class="t" style="left:124.5px;top:448.3px;font-size:9.6px;letter-spacing:-0.00px;color:#333;transform:scale(0.25);transform-origin:0 0;">≤ 50 V</div>
<div class="t" style="left:149.5px;top:448.3px;font-size:9.6px;letter-spacing:-0.00px;color:#333;transform:scale(0.25);transform-origin:0 0;">≤ 75 V</div>
<div class="t" style="left:175.5px;top:448.3px;font-size:9.6px;letter-spacing:-0.00px;color:#333;transform:scale(0.25);transform-origin:0 0;">≤ 60 V</div>
<div class="t" style="left:67.0px;top:454.3px;font-size:9.6px;letter-spacing:-0.25px;color:#24508e;transform:scale(0.25);transform-origin:0 0;">High-Voltage</div>
<div class="t" style="left:103.3px;top:454.3px;font-size:9.6px;letter-spacing:-0.00px;color:#333;transform:scale(0.25);transform-origin:0 0;">2</div>
<div class="t" style="left:123.9px;top:454.3px;font-size:9.6px;letter-spacing:0.00px;color:#333;transform:scale(0.25);transform-origin:0 0;">≤ 600 V</div>
<div class="t" style="left:148.9px;top:454.3px;font-size:9.6px;letter-spacing:0.00px;color:#333;transform:scale(0.25);transform-origin:0 0;">≤ 900 V</div>
<div class="t" style="left:174.9px;top:454.3px;font-size:9.6px;letter-spacing:0.00px;color:#333;transform:scale(0.25);transform-origin:0 0;">≤ 750 V</div>
<div class="t" style="left:67.0px;top:460.3px;font-size:9.6px;letter-spacing:-0.25px;color:#24508e;transform:scale(0.25);transform-origin:0 0;">High-Voltage</div>
<div class="t" style="left:100.9px;top:460.3px;font-size:9.6px;letter-spacing:0.00px;color:#333;transform:scale(0.25);transform-origin:0 0;">3 (B*)</div>
<div class="t" style="left:123.2px;top:460.3px;font-size:9.6px;letter-spacing:0.00px;color:#333;transform:scale(0.25);transform-origin:0 0;">≤ 1000 V</div>
<div class="t" style="left:148.2px;top:460.3px;font-size:9.6px;letter-spacing:0.00px;color:#333;transform:scale(0.25);transform-origin:0 0;">≤ 1500 V</div>
<div class="t" style="left:174.2px;top:460.3px;font-size:9.6px;letter-spacing:0.00px;color:#333;transform:scale(0.25);transform-origin:0 0;">≤ 1500 V</div>
<div class="abs" style="left:66px;top:464px;width:127.5px;height:14px;background:#d9dfe7;"></div>
<div class="t" style="left:67.0px;top:466.8px;font-size:9.6px;letter-spacing:-0.56px;color:#222;transform:scale(0.25);transform-origin:0 0;">This table has adoption on the basis of ISO 6469-3</div>
<div class="t" style="left:67.0px;top:470.3px;font-size:9.6px;letter-spacing:0.44px;color:#222;transform:scale(0.25);transform-origin:0 0;">ISO 6727-1 classifies voltage class 2 with 600 V DC and 900 V DC and does not consider voltage class 1</div>
<div class="t" style="left:67.0px;top:473.8px;font-size:9.6px;letter-spacing:-0.62px;color:#222;transform:scale(0.25);transform-origin:0 0;">ISO 6469-3 groups voltage classes 2 and 3 to class B</div>
<div class="abs" style="left:66px;top:478px;width:127.5px;height:11px;background:#fbfbfb;"></div>
<div class="t" style="left:79.0px;top:480.4px;font-size:8.8px;letter-spacing:-0.40px;color:#333;transform:scale(0.25);transform-origin:0 0;">Voltage class specification acc. to ISO 6469-1</div>
<div class="t" style="left:79.0px;top:483.4px;font-size:8.8px;letter-spacing:-0.57px;color:#333;transform:scale(0.25);transform-origin:0 0;">Peak voltage</div>
<div class="t" style="left:79.0px;top:486.4px;font-size:8.8px;letter-spacing:-0.56px;color:#333;transform:scale(0.25);transform-origin:0 0;">Root mean square (RMS)</div>
<svg style="left:67px;top:479px" width="10" height="9" viewBox="0 0 10 9" fill="none" stroke="#777" stroke-width=".5"><path d="M0 4.500c1.500-5 3-5 4.500 0s3 5 4.500 0"/></svg>
<div class="t" style="left:55.500px;top:488px;font-size:2.600px;color:#27457e;transform:rotate(-90deg);transform-origin:0 0;letter-spacing:.22px;">Source: BOSCH BVI/STE and IMR.pw</div>
<div class="t" style="left:57.1px;top:520.7px;font-size:20.8px;letter-spacing:0.77px;color:#ee7a3c;transform:scale(0.25);transform-origin:0 0;">Why AC Voltage is lower than DC?</div>
<div class="t" style="left:57.5px;top:530.7px;font-size:10.8px;letter-spacing:0.15px;color:#1e1e1e;font-weight:bold;transform:scale(0.25);transform-origin:0 0;">The AC source triggers more current than DC for the same voltage due to the varying nature and capacitive</div>
<div class="t" style="left:57.5px;top:533.8px;font-size:10.8px;letter-spacing:0.41px;color:#1e1e1e;font-weight:bold;transform:scale(0.25);transform-origin:0 0;">of human body This creates</div>
<div class="abs" style="left:53.6px;top:541.7px;width:1px;height:1px;background:#333;"></div>
<div class="t" style="left:57.5px;top:540.8px;font-size:10.8px;letter-spacing:0.09px;color:#1e1e1e;font-weight:bold;transform:scale(0.25);transform-origin:0 0;">awareness and to limit very low AC voltage level for victims Due to this fact all</div>
<div class="abs" style="left:53.6px;top:548.5px;width:1px;height:1px;background:#333;"></div>
<div class="t" style="left:57.5px;top:547.6px;font-size:10.8px;letter-spacing:0.17px;color:#1e1e1e;font-weight:bold;transform:scale(0.25);transform-origin:0 0;">standards are recommending 30V and 60V as high voltage for AC and DC respectively The let-go current is</div>
<div class="t" style="left:57.5px;top:551.4px;font-size:10.8px;letter-spacing:0.52px;color:#1e1e1e;font-weight:bold;transform:scale(0.25);transform-origin:0 0;">minimum current that a person</div>
<div class="abs" style="left:53.6px;top:566.1px;width:1px;height:1px;background:#333;"></div>
<div class="t" style="left:57.5px;top:565.2px;font-size:10.8px;letter-spacing:0.06px;color:#1e1e1e;font-weight:bold;transform:scale(0.25);transform-origin:0 0;">free its hand away From the Characteristics below the let-go current for AC is less than 10 mA</div>
<div class="abs" style="left:53.6px;top:573.1px;width:1px;height:1px;background:#333;"></div>
<div class="t" style="left:57.5px;top:572.2px;font-size:10.8px;letter-spacing:0.27px;color:#1e1e1e;font-weight:bold;transform:scale(0.25);transform-origin:0 0;">for the same voltage DC let-go current is considerably more Because human body exhibits RC behaviour</div>
<div class="t" style="left:57.5px;top:574.9px;font-size:10.8px;letter-spacing:0.26px;color:#1e1e1e;font-weight:bold;transform:scale(0.25);transform-origin:0 0;">between 500 to 1000 ohms the same let-go</div>
<div class="abs" style="left:53.6px;top:583.0px;width:1px;height:1px;background:#333;"></div>
<div class="t" style="left:57.5px;top:582.1px;font-size:10.8px;letter-spacing:0.35px;color:#1e1e1e;font-weight:bold;transform:scale(0.25);transform-origin:0 0;">be threshold magnitude to push the currents to reach According to Charles Dalziel experiments muscle</div>
<div class="t" style="left:57.5px;top:585.7px;font-size:10.8px;letter-spacing:0.04px;color:#1e1e1e;font-weight:bold;transform:scale(0.25);transform-origin:0 0;">is continuous for DC shock whereas in the case of AC a person can get cycling chance of muscle contraction</div>
<div class="t" style="left:57.5px;top:588.9px;font-size:10.8px;letter-spacing:0.13px;color:#1e1e1e;font-weight:bold;transform:scale(0.25);transform-origin:0 0;">AC source</div>
<div class="t" style="left:103.0px;top:558.3px;font-size:11.2px;letter-spacing:0.63px;color:#ee7a3c;transform:scale(0.25);transform-origin:0 0;">Safety Break-Free Agreement?</div>
<div class="t" style="left:52.2px;top:619.8px;font-size:13.2px;letter-spacing:0.28px;color:#ee7a3c;transform:scale(0.25);transform-origin:0 0;">Conventional of time/current on/hazardous</div>
<div class="t" style="left:52.2px;top:623.0px;font-size:13.2px;letter-spacing:-1.42px;color:#ee7a3c;transform:scale(0.25);transform-origin:0 0;">AC Versus DC</div>
<div class="abs" style="left:51.2px;top:630.4px;width:66.7px;height:50.4px;background:#fdfcfc;"></div>
<div class="t" style="left:52.5px;top:631.9px;font-size:9.2px;letter-spacing:0.58px;color:#2a2a2a;font-weight:bold;transform:scale(0.25);transform-origin:0 0;">more current than DC for the</div>
<div class="t" style="left:52.5px;top:634.5px;font-size:9.2px;letter-spacing:0.31px;color:#2a2a2a;font-weight:bold;transform:scale(0.25);transform-origin:0 0;">voltage due to the varying</div>
<div class="t" style="left:52.5px;top:637.4px;font-size:9.2px;letter-spacing:0.26px;color:#2a2a2a;font-weight:bold;transform:scale(0.25);transform-origin:0 0;">and capacitive behavior of human body This creates</div>
<div class="t" style="left:52.5px;top:640.0px;font-size:9.2px;letter-spacing:0.42px;color:#2a2a2a;font-weight:bold;transform:scale(0.25);transform-origin:0 0;">awareness and to limit very low AC voltage</div>
<div class="t" style="left:52.5px;top:642.9px;font-size:9.2px;letter-spacing:0.02px;color:#2a2a2a;font-weight:bold;transform:scale(0.25);transform-origin:0 0;">for victims Due to this fact all international standards are</div>
<div class="t" style="left:52.5px;top:645.5px;font-size:9.2px;letter-spacing:0.18px;color:#2a2a2a;font-weight:bold;transform:scale(0.25);transform-origin:0 0;">30V and 60V as high voltage for AC and DC respectively</div>
<div class="t" style="left:52.5px;top:649.9px;font-size:9.2px;letter-spacing:0.12px;color:#2a2a2a;font-weight:bold;transform:scale(0.25);transform-origin:0 0;">let-go current is the minimum current that a person</div>
<div class="t" style="left:52.5px;top:652.7px;font-size:9.2px;letter-spacing:1.48px;color:#2a2a2a;font-weight:bold;transform:scale(0.25);transform-origin:0 0;">free its</div>
<div class="t" style="left:52.5px;top:655.6px;font-size:9.2px;letter-spacing:0.34px;color:#2a2a2a;font-weight:bold;transform:scale(0.25);transform-origin:0 0;">away From the Characteristics below</div>
<div class="t" style="left:52.5px;top:658.6px;font-size:9.2px;letter-spacing:0.24px;color:#2a2a2a;font-weight:bold;transform:scale(0.25);transform-origin:0 0;">let-go current for AC is less than 10 mA</div>
<div class="t" style="left:52.5px;top:662.0px;font-size:9.2px;letter-spacing:0.32px;color:#2a2a2a;font-weight:bold;transform:scale(0.25);transform-origin:0 0;">for the same voltage DC let-go current is considerably</div>
<div class="t" style="left:52.5px;top:664.8px;font-size:9.2px;letter-spacing:0.02px;color:#2a2a2a;font-weight:bold;transform:scale(0.25);transform-origin:0 0;">Because</div>
<div class="t" style="left:52.5px;top:667.7px;font-size:9.2px;letter-spacing:0.10px;color:#2a2a2a;font-weight:bold;transform:scale(0.25);transform-origin:0 0;">body exhibits RC behaviour varying between 500 to 1000</div>
<div class="t" style="left:52.5px;top:670.5px;font-size:9.2px;letter-spacing:8.07px;color:#2a2a2a;font-weight:bold;transform:scale(0.25);transform-origin:0 0;">the</div>
<div class="t" style="left:52.5px;top:673.7px;font-size:9.2px;letter-spacing:0.02px;color:#2a2a2a;font-weight:bold;transform:scale(0.25);transform-origin:0 0;">let-go can be threshold magnitude to push the currents to</div>
<div class="t" style="left:52.5px;top:676.4px;font-size:9.2px;letter-spacing:38.00px;color:#2a2a2a;font-weight:bold;transform:scale(0.25);transform-origin:0 0;"></div>
<div class="t" style="left:52.5px;top:685.2px;font-size:9.6px;letter-spacing:0.21px;color:#2a2a2a;font-weight:bold;transform:scale(0.25);transform-origin:0 0;">to Charles Dalziel experiments muscle</div>
<svg style="left:124.300px;top:616.9px" width="69" height="34.3" viewBox="0 0 69 34.3"><rect x="0" y="0" width="69" height="34.3" fill="#fbfcfc"/><rect x="6.500" y="1" width="61" height="27.299999999999997" fill="#d4f1f0"/><path d="M30 1h37.500v27.299999999999997H52c-1-5-3-7-6-10s-7-6-9-10-5-6-7-7.299999999999997z" fill="#bcb4e2"/><path d="M36 1h31.500v27.299999999999997h-9c-1-5-3-7-5-9s-6-5-8-9-7-5-9.500-9.299999999999997z" fill="#f07ab4"/><path d="M45 1h22.500v25.299999999999997c-3-2-5-4-7-8s-6-6-8-10-5-5-7.500-7.299999999999997z" fill="#ee3f8e"/><path d="M20 1v27.299999999999997" stroke="#3aa8a0" stroke-width=".5"/><path d="M6.500 1v27.299999999999997h61" stroke="#555" stroke-width=".4" fill="none"/><rect x="3.500" y="1.5" width="2" height=".6" fill="#666"/><rect x="3.500" y="5.1" width="2" height=".6" fill="#666"/><rect x="3.500" y="8.7" width="2" height=".6" fill="#666"/><rect x="3.500" y="12.3" width="2" height=".6" fill="#666"/><rect x="3.500" y="16.0" width="2" height=".6" fill="#666"/><rect x="3.500" y="19.6" width="2" height=".6" fill="#666"/><rect x="3.500" y="23.2" width="2" height=".6" fill="#666"/><rect x="3.500" y="26.8" width="2" height=".6" fill="#666"/><rect x="8" y="29.299999999999997" width="3" height=".7" fill="#666"/><rect x="15" y="29.299999999999997" width="3" height=".7" fill="#666"/><rect x="22" y="29.299999999999997" width="3" height=".7" fill="#666"/><rect x="29" y="29.299999999999997" width="3" height=".7" fill="#666"/><rect x="36" y="29.299999999999997" width="3" height=".7" fill="#666"/><rect x="43" y="29.299999999999997" width="3" height=".7" fill="#666"/><rect x="50" y="29.299999999999997" width="3" height=".7" fill="#666"/><rect x="57" y="29.299999999999997" width="3" height=".7" fill="#666"/><rect x="64" y="29.299999999999997" width="3" height=".7" fill="#666"/><rect x="24" y="32.099999999999994" width="18" height=".9" fill="#555"/></svg>
<svg style="left:124.300px;top:653.3px" width="69" height="36" viewBox="0 0 69 36"><rect x="0" y="0" width="69" height="36" fill="#fbfcfc"/><rect x="6.500" y="1" width="61" height="29" fill="#d4f1f0"/><path d="M30 1h37.500v29H52c-1-5-3-7-6-10s-7-6-9-10-5-6-7-9z" fill="#bcb4e2"/><path d="M36 1h31.500v29h-9c-1-5-3-7-5-9s-6-5-8-9-7-5-9.500-11z" fill="#f07ab4"/><path d="M45 1h22.500v27c-3-2-5-4-7-8s-6-6-8-10-5-5-7.500-9z" fill="#ee3f8e"/><path d="M20 1v29" stroke="#3aa8a0" stroke-width=".5"/><path d="M6.500 1v29h61" stroke="#555" stroke-width=".4" fill="none"/><rect x="3.500" y="1.5" width="2" height=".6" fill="#666"/><rect x="3.500" y="5.4" width="2" height=".6" fill="#666"/><rect x="3.500" y="9.2" width="2" height=".6" fill="#666"/><rect x="3.500" y="13.1" width="2" height=".6" fill="#666"/><rect x="3.500" y="16.9" width="2" height=".6" fill="#666"/><rect x="3.500" y="20.8" width="2" height=".6" fill="#666"/><rect x="3.500" y="24.6" width="2" height=".6" fill="#666"/><rect x="3.500" y="28.5" width="2" height=".6" fill="#666"/><rect x="8" y="31" width="3" height=".7" fill="#666"/><rect x="15" y="31" width="3" height=".7" fill="#666"/><rect x="22" y="31" width="3" height=".7" fill="#666"/><rect x="29" y="31" width="3" height=".7" fill="#666"/><rect x="36" y="31" width="3" height=".7" fill="#666"/><rect x="43" y="31" width="3" height=".7" fill="#666"/><rect x="50" y="31" width="3" height=".7" fill="#666"/><rect x="57" y="31" width="3" height=".7" fill="#666"/><rect x="64" y="31" width="3" height=".7" fill="#666"/><rect x="24" y="33.8" width="18" height=".9" fill="#555"/></svg>
<div class="t" style="left:56.9px;top:715.8px;font-size:20.0px;letter-spacing:1.19px;color:#ee7a3c;transform:scale(0.25);transform-origin:0 0;white-space:pre;">Which is dangerous  AC or DC</div>
<div class="abs" style="left:51px;top:725.1999999999999px;width:1.5px;height:0.6px;background:#555;"></div>
<div class="t" style="left:55.9px;top:724.1px;font-size:10.8px;letter-spacing:0.13px;color:#1e1e1e;font-weight:bold;transform:scale(0.25);transform-origin:0 0;">is continuous for DC shock whereas in the case of AC a person can get cycling chance of muscle contraction</div>
<div class="t" style="left:55.9px;top:728.3px;font-size:10.8px;letter-spacing:0.46px;color:#1e1e1e;font-weight:bold;transform:scale(0.25);transform-origin:0 0;">AC source triggers more current than DC for the same voltage due to the varying nature and capacitive</div>
<div class="t" style="left:55.9px;top:732.1px;font-size:10.8px;letter-spacing:0.15px;color:#1e1e1e;font-weight:bold;transform:scale(0.25);transform-origin:0 0;">of human body This creates the awareness</div>
<div class="abs" style="left:51px;top:741.1999999999999px;width:1.5px;height:0.6px;background:#555;"></div>
<div class="t" style="left:55.9px;top:740.1px;font-size:10.8px;letter-spacing:0.09px;color:#1e1e1e;font-weight:bold;transform:scale(0.25);transform-origin:0 0;">to limit very low AC voltage level for victims Due to this fact all international standards are recommending 30V</div>
<div class="t" style="left:55.9px;top:744.8px;font-size:10.8px;letter-spacing:0.23px;color:#1e1e1e;font-weight:bold;transform:scale(0.25);transform-origin:0 0;">60V as high voltage for AC and DC respectively The let-go current is the minimum current</div>
<div class="t" style="left:55.9px;top:752.6px;font-size:10.0px;letter-spacing:1.16px;color:#1e1e1e;font-weight:bold;transform:scale(0.25);transform-origin:0 0;white-space:pre;">Therefore,   AC is dangerous   comparing   with  DC</div>
<div class="abs" style="left:50.7px;top:757.2px;width:143.2px;height:26.1px;background:#fcfbfb;"></div>
<svg style="left:50.700px;top:757.200px" width="143.200" height="26.100" viewBox="0 0 143.200 26.100" fill="none"><path d="M4 12.800h64M78 12.800h66" stroke="#9a9a9a" stroke-width=".6"/><path d="M6.800 1v24M80.500 1v24" stroke="#6a5ae0" stroke-width=".9"/><path d="M6.800 12.800c6-11 12-11 19-3s14 15 22 9 7-6 9-6" stroke="#aaa" stroke-width=".6"/><path d="M82 5.100h48" stroke="#bbb" stroke-width=".6"/><path d="M5.300 3L6.800 0l1.500 3zM5.300 23l1.500 3 1.500-3zM79 3l1.500-3L82 3zM79 23l1.500 3 1.500-3z" fill="#6a5ae0"/><path d="M66 11.300l3.500 1.500-3.500 1.500zM139 11.300l3.500 1.500-3.500 1.500z" fill="#6a5ae0"/></svg>
<div class="t" style="left:78.5px;top:785.4px;font-size:11.2px;letter-spacing:0.22px;color:#777;transform:scale(0.25);transform-origin:0 0;">AC</div>
<div class="t" style="left:170.5px;top:785.4px;font-size:11.2px;letter-spacing:-0.09px;color:#777;transform:scale(0.25);transform-origin:0 0;">DC</div>
<div class="t" style="left:110.0px;top:772.4px;font-size:8.8px;letter-spacing:0.70px;color:#666;font-weight:bold;transform:scale(0.25);transform-origin:0 0;">Time(s)</div>
<div class="t" style="left:181.0px;top:772.4px;font-size:8.8px;letter-spacing:0.70px;color:#666;font-weight:bold;transform:scale(0.25);transform-origin:0 0;">Time(s)</div>
<div class="abs" style="left:226px;top:293.5px;width:1034px;height:490px;background:linear-gradient(180deg,#d2d7d8 0%,#ccd1d3 12%,#c4cacd 50%,#bec5c9 100%);"></div>
<div class="abs" style="left:226px;top:293.5px;width:1034px;height:490px;background:linear-gradient(90deg,rgba(80,95,110,.13) 0%,rgba(90,100,110,.05) 12%,rgba(255,255,255,0) 30%,rgba(255,255,255,.03) 100%);"></div>
<div class="abs" style="left:316px;top:296.500px;width:862.500px;height:11px;box-sizing:border-box;background:#fdfdfd;border:1px solid #a3aaaf;"></div>
<div class="t" style="left:356.7px;top:299.7px;font-size:7px;letter-spacing:0.00px;color:#444;">6</div>
<div class="t" style="left:421.4px;top:299.7px;font-size:7px;letter-spacing:0.00px;color:#444;">5</div>
<div class="t" style="left:486.1px;top:299.7px;font-size:7px;letter-spacing:0.00px;color:#444;">4</div>
<div class="t" style="left:550.8px;top:299.7px;font-size:7px;letter-spacing:0.00px;color:#444;">3</div>
<div class="t" style="left:615.5px;top:299.7px;font-size:7px;letter-spacing:0.00px;color:#444;">2</div>
<div class="t" style="left:680.2px;top:299.7px;font-size:7px;letter-spacing:0.00px;color:#444;">1</div>
<div class="t" style="left:744.9px;top:299.7px;font-size:7px;letter-spacing:0.00px;color:#444;">0</div>
<div class="t" style="left:809.6px;top:299.7px;font-size:7px;letter-spacing:0.00px;color:#444;">1</div>
<div class="t" style="left:874.3px;top:299.7px;font-size:7px;letter-spacing:0.00px;color:#444;">2</div>
<div class="t" style="left:939.0px;top:299.7px;font-size:7px;letter-spacing:0.00px;color:#444;">3</div>
<div class="t" style="left:1003.7px;top:299.7px;font-size:7px;letter-spacing:0.00px;color:#444;">4</div>
<div class="t" style="left:1068.4px;top:299.7px;font-size:7px;letter-spacing:0.00px;color:#444;">5</div>
<div class="t" style="left:1133.1px;top:299.7px;font-size:7px;letter-spacing:0.00px;color:#444;">6</div>
<svg style="left:0;top:0" width="1916" height="944" viewBox="0 0 1916 944" fill="none" stroke="#555" stroke-width=".9"><path d="M326.2 300v4M334.3 301.500v1M342.4 301.500v1M350.5 301.500v1M366.7 301.500v1M374.8 301.500v1M382.9 301.500v1M390.9 300v4M399.0 301.500v1M407.1 301.500v1M415.2 301.500v1M431.4 301.500v1M439.5 301.500v1M447.6 301.500v1M455.6 300v4M463.7 301.500v1M471.8 301.500v1M479.9 301.500v1M496.1 301.500v1M504.2 301.500v1M512.3 301.500v1M520.3 300v4M528.4 301.500v1M536.5 301.500v1M544.6 301.500v1M560.8 301.500v1M568.9 301.500v1M577.0 301.500v1M585.0 300v4M593.1 301.500v1M601.2 301.500v1M609.3 301.500v1M625.5 301.500v1M633.6 301.500v1M641.7 301.500v1M649.8 300v4M657.8 301.500v1M665.9 301.500v1M674.0 301.500v1M690.2 301.500v1M698.3 301.500v1M706.4 301.500v1M714.4 300v4M722.5 301.500v1M730.6 301.500v1M738.7 301.500v1M754.9 301.500v1M763.0 301.500v1M771.1 301.500v1M779.1 300v4M787.2 301.500v1M795.3 301.500v1M803.4 301.500v1M819.6 301.500v1M827.7 301.500v1M835.8 301.500v1M843.8 300v4M851.9 301.500v1M860.0 301.500v1M868.1 301.500v1M884.3 301.500v1M892.4 301.500v1M900.5 301.500v1M908.5 300v4M916.6 301.500v1M924.7 301.500v1M932.8 301.500v1M949.0 301.500v1M957.1 301.500v1M965.2 301.500v1M973.2 300v4M981.3 301.500v1M989.4 301.500v1M997.5 301.500v1M1013.7 301.500v1M1021.8 301.500v1M1029.9 301.500v1M1038.0 300v4M1046.0 301.500v1M1054.1 301.500v1M1062.2 301.500v1M1078.4 301.500v1M1086.5 301.500v1M1094.6 301.500v1M1102.7 300v4M1110.7 301.500v1M1118.8 301.500v1M1126.9 301.500v1M1143.1 301.500v1M1151.2 301.500v1M1159.3 301.500v1M1167.3 300v4M1175.4 301.500v1"/></svg>
<div class="abs" style="left:228px;top:315px;width:12px;height:456px;box-sizing:border-box;background:#fdfdfd;border:1px solid #a3aaaf;"></div>
<div class="t" style="left:231.300px;top:335.0px;font-size:7px;color:#444;transform:rotate(-90deg);transform-origin:0 0;">3</div>
<div class="t" style="left:231.300px;top:399.9px;font-size:7px;color:#444;transform:rotate(-90deg);transform-origin:0 0;">2</div>
<div class="t" style="left:231.300px;top:464.8px;font-size:7px;color:#444;transform:rotate(-90deg);transform-origin:0 0;">1</div>
<div class="t" style="left:231.300px;top:529.7px;font-size:7px;color:#444;transform:rotate(-90deg);transform-origin:0 0;">0</div>
<div class="t" style="left:231.300px;top:594.6px;font-size:7px;color:#444;transform:rotate(-90deg);transform-origin:0 0;">1</div>
<div class="t" style="left:231.300px;top:659.5px;font-size:7px;color:#444;transform:rotate(-90deg);transform-origin:0 0;">2</div>
<div class="t" style="left:231.300px;top:724.4px;font-size:7px;color:#444;transform:rotate(-90deg);transform-origin:0 0;">3</div>
<svg style="left:0;top:0" width="1916" height="944" viewBox="0 0 1916 944" fill="none" stroke="#555" stroke-width=".9"><path d="M234 324.9h1M234 341.1h1M234 349.2h1M234 357.3h1M232.500 365.5h4M234 373.6h1M234 381.7h1M234 389.8h1M234 406.0h1M234 414.1h1M234 422.2h1M232.500 430.4h4M234 438.5h1M234 446.6h1M234 454.7h1M234 470.9h1M234 479.0h1M234 487.1h1M232.500 495.3h4M234 503.4h1M234 511.5h1M234 519.6h1M234 535.8h1M234 543.9h1M234 552.0h1M232.500 560.2h4M234 568.3h1M234 576.4h1M234 584.5h1M234 600.7h1M234 608.8h1M234 616.9h1M232.500 625.1h4M234 633.2h1M234 641.3h1M234 649.4h1M234 665.6h1M234 673.7h1M234 681.8h1M232.500 690.0h4M234 698.1h1M234 706.2h1M234 714.3h1M234 730.5h1M234 738.6h1M234 746.7h1M232.500 754.9h4M234 763.0h1"/></svg>
<div class="abs" style="left:316px;top:315.500px;width:864px;height:455px;background:#f5e1de;box-shadow:2px 2px 3px rgba(60,70,80,.55);"></div>
<div class="t" style="left:426.3px;top:461.4px;font-size:39.5px;letter-spacing:0.02px;color:#0a0a0a;font-weight:bold;">High Voltage Systems and Safety –</div>
<div class="t" style="left:506.0px;top:503.5px;font-size:39.5px;letter-spacing:-0.14px;color:#0a0a0a;font-weight:bold;">Electric Vehicle (HVSS-EV)</div>
<div class="t" style="left:331.5px;top:680.8px;font-size:15.8px;letter-spacing:0.33px;color:#1f2d3d;font-weight:bold;">Dr. R. Kannadasan,</div>
<div class="t" style="left:331.5px;top:700.6px;font-size:15.8px;letter-spacing:0.19px;color:#1f2d3d;font-weight:bold;">Lead Adv Tech Dev- Future Skills,</div>
<div class="t" style="left:331.5px;top:720.6px;font-size:15.8px;letter-spacing:0.20px;color:#1f2d3d;font-weight:bold;">APDTE, IQL, TVS Motor Company</div>
<div class="abs" style="left:1248.5px;top:316px;width:11.5px;height:464px;background:rgba(226,230,233,.75);"></div>
<div class="abs" style="left:1249.5px;top:742px;width:10.5px;height:26px;background:rgba(240,242,244,.8);"></div>
<svg style="left:1251px;top:319.500px" width="8" height="5" viewBox="0 0 8 5" fill="#444"><path d="M0 5l4-5 4 5z"/></svg>
<div class="abs" style="left:1249.500px;top:351px;width:10.500px;height:25.500px;box-sizing:border-box;border:1px solid #a9b1b8;border-radius:2px;background:#f6f7f8;"></div>
<div class="abs" style="left:1252.5px;top:361.5px;width:5px;height:1px;background:#7b838a;"></div>
<div class="abs" style="left:1252.5px;top:363.5px;width:5px;height:1px;background:#7b838a;"></div>
<div class="abs" style="left:1252.5px;top:365.5px;width:5px;height:1px;background:#7b838a;"></div>
<svg style="left:1251.500px;top:733px" width="7" height="4" viewBox="0 0 8 5" fill="#777"><path d="M0 0l4 5 4-5z"/></svg>
<svg style="left:1251.500px;top:743.500px" width="7" height="8" viewBox="0 0 7 8" fill="#333"><path d="M0 4l3.500-4L7 4zM0 8l3.500-4L7 8z"/></svg>
<svg style="left:1251.500px;top:756px" width="7" height="8" viewBox="0 0 7 8" fill="#333"><path d="M0 0l3.500 4L7 0zM0 4l3.500 4L7 4z"/></svg>
<div class="abs" style="left:226px;top:779.5px;width:1034px;height:6px;background:linear-gradient(#c9ced1,#e9ecee 35%,#f3f5f6);"></div>
<div class="abs" style="left:226px;top:785.5px;width:1024px;height:27.5px;background:#fefefe;"></div>
<div class="abs" style="left:1250px;top:785.5px;width:10px;height:27.5px;background:#e9ecef;"></div>
<svg style="left:1251.500px;top:789.500px" width="7" height="4" viewBox="0 0 8 5" fill="#9aa1a8"><path d="M0 5l4-5 4 5z"/></svg>
<svg style="left:1251.500px;top:804px" width="7" height="4" viewBox="0 0 8 5" fill="#9aa1a8"><path d="M0 0l4 5 4-5z"/></svg>
<div class="t" style="left:233.6px;top:791.0px;font-size:12px;letter-spacing:0.00px;color:#2f2f2f;">Click to add notes</div>
<div class="abs" style="left:30px;top:813px;width:1230px;height:17px;background:linear-gradient(#d3d8da,#c4cacd);"></div>
<div class="abs" style="left:30px;top:813px;width:1230px;height:1px;background:#a9b1b8;"></div>
<div class="t" style="left:35.3px;top:817.5px;font-size:8.6px;letter-spacing:0.05px;color:#444;">Slide 1 of 14</div>
<div class="t" style="left:98.2px;top:817.5px;font-size:8.6px;letter-spacing:0.04px;color:#444;">"Office Theme"</div>
<div class="abs" style="left:91.3px;top:816px;width:1px;height:11px;background:#9fa8af;"></div>
<div class="abs" style="left:92.3px;top:816px;width:1px;height:11px;background:#e4e8eb;"></div>
<div class="abs" style="left:164.2px;top:816px;width:1px;height:11px;background:#9fa8af;"></div>
<div class="abs" style="left:165.2px;top:816px;width:1px;height:11px;background:#e4e8eb;"></div>
<div class="abs" style="left:190.9px;top:816px;width:1px;height:11px;background:#9fa8af;"></div>
<div class="abs" style="left:191.9px;top:816px;width:1px;height:11px;background:#e4e8eb;"></div>
<svg style="left:171px;top:815.500px" width="13" height="12" viewBox="0 0 13 12"><rect x=".5" y="2.500" width="9" height="8.500" fill="#eef2fa" stroke="#5a74b0" stroke-width=".9"/><path d="M4 7l2 2.500L12 1" fill="none" stroke="#3a5fb8" stroke-width="1.500"/></svg>
<div class="abs" style="left:1046.5px;top:816px;width:1px;height:11px;background:#9fa8af;"></div>
<div class="abs" style="left:1052px;top:815px;width:13px;height:13px;box-sizing:border-box;border:1px solid #e0b93a;background:#fbe9a0;border-radius:1px;"></div>
<svg style="left:1054.500px;top:817.500px" width="8" height="8" viewBox="0 0 8 8" fill="none" stroke="#555" stroke-width=".9"><rect x=".5" y=".5" width="7" height="7"/><path d="M3 .5v7M3 4h4.500"/></svg>
<svg style="left:1068.500px;top:817.500px" width="9" height="8" viewBox="0 0 9 8" fill="#6b727a"><rect x="0" y="0" width="3.500" height="3"/><rect x="5" y="0" width="3.500" height="3"/><rect x="0" y="4.500" width="3.500" height="3"/><rect x="5" y="4.500" width="3.500" height="3"/></svg>
<svg style="left:1081.500px;top:817px" width="10" height="9" viewBox="0 0 10 9" fill="none" stroke="#6b727a" stroke-width=".9"><path d="M5 1.500C3.500.5 1.500.5.5 1v6.500c1-.5 3-.5 4.500.5 1.500-1 3.500-1 4.500-.5V1C8.500.5 6.500.5 5 1.500zM5 1.500V8"/></svg>
<svg style="left:1096.500px;top:817px" width="10" height="9" viewBox="0 0 10 9" fill="none" stroke="#6b727a" stroke-width=".9"><path d="M.5.8h9M1.500.8v4.500h7V.8M5 5.300V7M3 8.500l2-1.500 2 1.500"/></svg>
<div class="t" style="left:1116.0px;top:818.5px;font-size:8px;letter-spacing:-0.00px;color:#666;">87%</div>
<svg style="left:1138.500px;top:815.500px" width="12" height="12" viewBox="-.5 -.5 12 12" fill="#f1f3f4" stroke="#7b828a" stroke-width=".9"><circle cx="5.500" cy="5.500" r="5.200"/><path d="M3 5.500h5"/></svg>
<div class="abs" style="left:1152px;top:821px;width:76px;height:1px;background:#b4bbc0;"></div>
<div class="abs" style="left:1152px;top:822px;width:76px;height:1px;background:#e6e9ec;"></div>
<div class="abs" style="left:1190px;top:818px;width:1px;height:7px;background:#aab1b6;"></div>
<svg style="left:1180px;top:816.500px" width="7" height="10" viewBox="0 0 7 10" fill="#f1f3f5" stroke="#7b838a" stroke-width=".9"><path d="M.5.5h6v6L3.500 9.500.5 6.500z"/></svg>
<svg style="left:1227px;top:815.500px" width="12" height="12" viewBox="-.5 -.5 12 12" fill="#f1f3f4" stroke="#7b828a" stroke-width=".9"><circle cx="5.500" cy="5.500" r="5.200"/><path d="M3 5.500h5M5.500 3v5"/></svg>
<svg style="left:1246px;top:816px" width="11" height="11" viewBox="0 0 11 11" fill="none" stroke="#555" stroke-width=".9"><rect x=".5" y=".5" width="10" height="10"/><path d="M2.500 2.500l2 2M8.500 2.500l-2 2M2.500 8.500l2-2M8.500 8.500l-2-2M2.500 4V2.500H4M7 2.500h1.500V4M2.500 7v1.500H4M7 8.500h1.500V7"/></svg>
</div></div>
<div class="abs" style="left:546px;top:465.500px;width:198px;height:66px;border-radius:33px;background:rgba(40,38,38,.64);"></div>
<svg style="left:562px;top:484px" width="32" height="32" viewBox="0 0 24 24"><path d="M16 9V4h1c.550 0 1-.450 1-1s-.450-1-1-1H7c-.550 0-1 .450-1 1s.450 1 1 1h1v5c0 1.660-1.340 3-3 3v2h5.970v7l1 1 1-1v-7H19v-2c-1.660 0-3-1.340-3-3z" fill="#f3f3f3"/><path d="M3.500 4l17 17" stroke="#555" stroke-width="3.600"/><path d="M3 3.500l17.500 17.500" stroke="#f3f3f3" stroke-width="1.700"/></svg>
<svg style="left:634px;top:488px" width="28" height="28" viewBox="0 0 24 24" fill="rgba(190,190,190,.55)"><path d="M19 11h-1.700c0 .740-.160 1.430-.430 2.050l1.230 1.230c.560-.980.900-2.090.900-3.280zm-4.020.170c0-.060.020-.110.020-.170V5c0-1.660-1.340-3-3-3S9 3.340 9 5v.180l5.980 5.990zM4.270 3L3 4.270l6.010 6.010V11c0 1.660 1.330 3 2.990 3 .220 0 .440-.030.650-.080l1.660 1.660c-.710.330-1.500.520-2.310.520-2.760 0-5.300-2.100-5.300-5.100H5c0 3.410 2.720 6.230 6 6.720V21h2v-3.280c.910-.130 1.770-.450 2.540-.900L19.730 21 21 19.730 4.270 3z"/></svg>
<div class="abs" style="left:708.100px;top:486.5px;width:5px;height:5px;border-radius:50%;background:#f1f1f1;"></div>
<div class="abs" style="left:708.100px;top:496.0px;width:5px;height:5px;border-radius:50%;background:#f1f1f1;"></div>
<div class="abs" style="left:708.100px;top:505.1px;width:5px;height:5px;border-radius:50%;background:#f1f1f1;"></div>
<div class="abs" style="left:1164px;top:734px;width:66px;height:66px;border-radius:50%;background:rgba(32,33,36,.54);"></div>
<svg style="left:1181px;top:750px" width="32" height="32" viewBox="0 0 32 32" fill="none" stroke="#f3f3f3"><circle cx="13" cy="13" r="8.500" stroke-width="3"/><path d="M19.500 19.500l9 9" stroke-width="4" stroke-linecap="round"/><path d="M9 13h8M13 9v8" stroke-width="2.200"/></svg></div>
</div>
</body>
</html>
